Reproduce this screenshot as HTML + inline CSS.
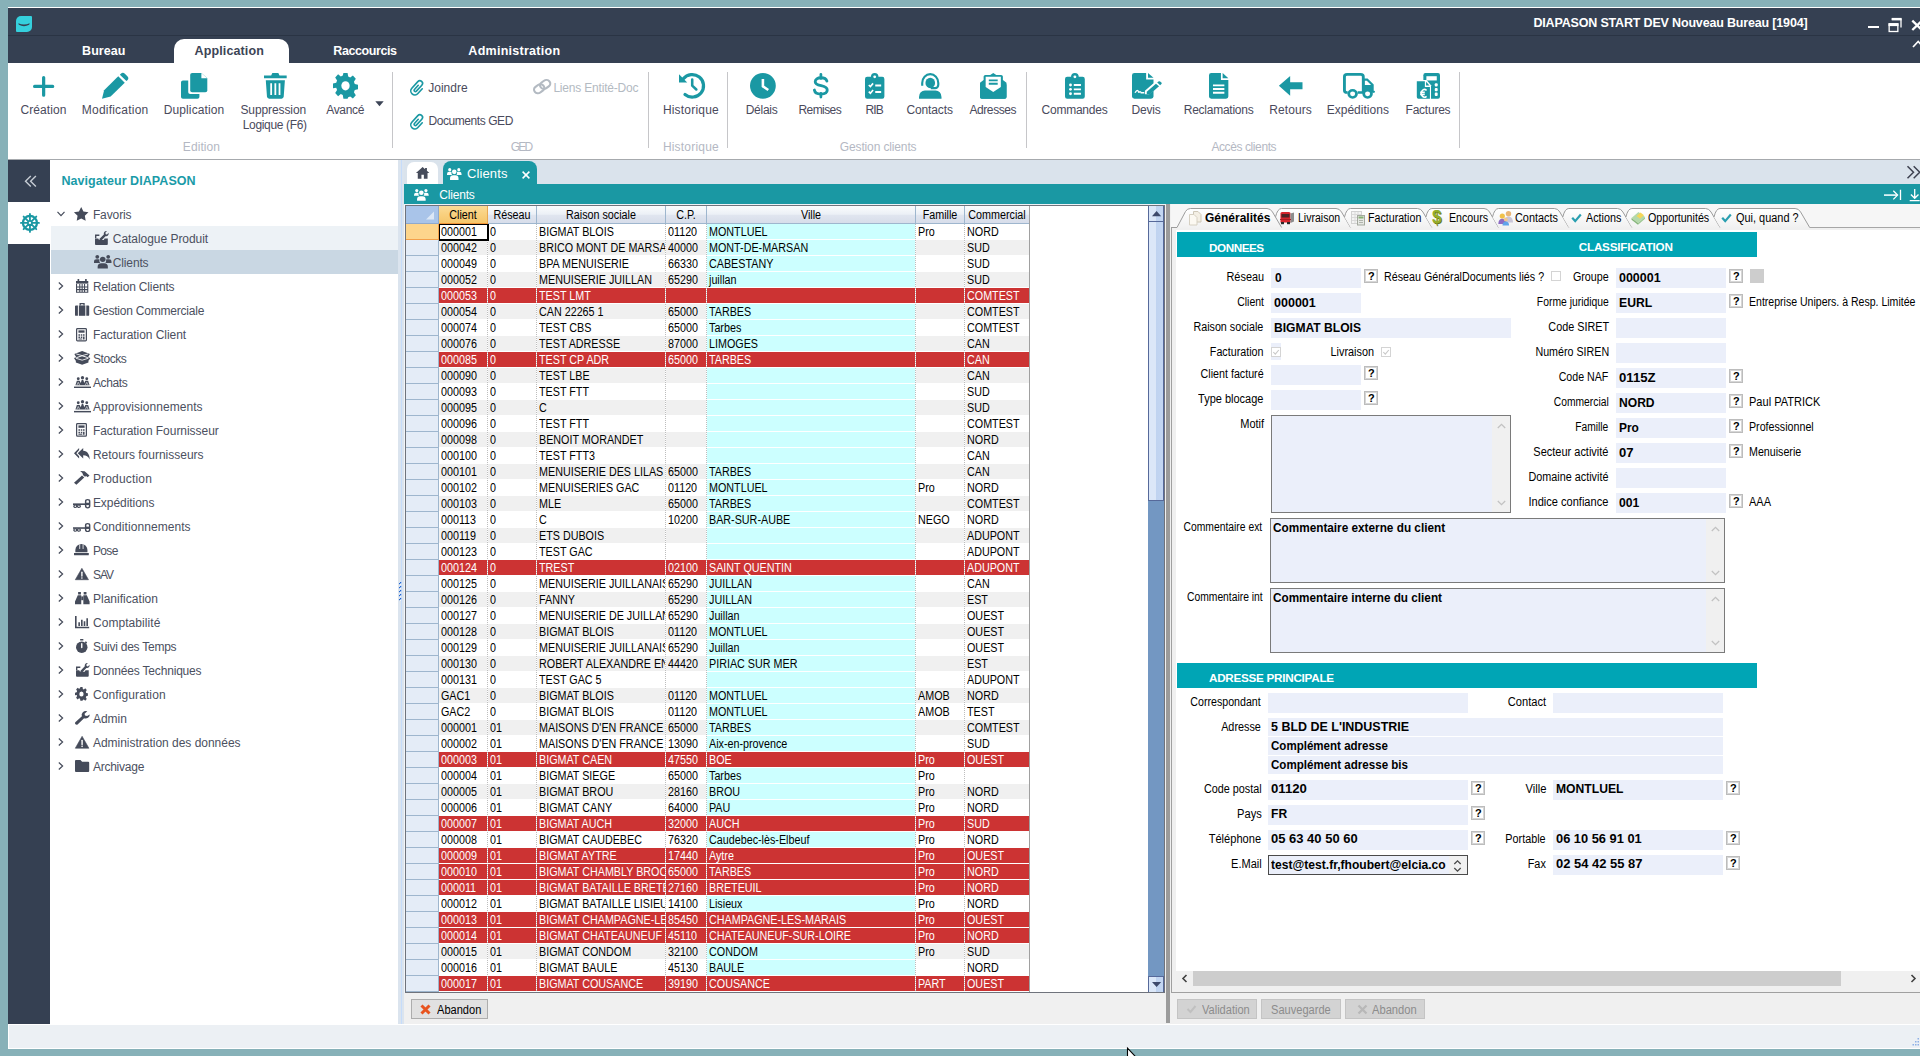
<!DOCTYPE html><html><head><meta charset='utf-8'><title>DIAPASON</title><style>
*{box-sizing:border-box;margin:0;padding:0}
html,body{width:1920px;height:1056px;overflow:hidden}
body{background:#87b1b8;font-family:"Liberation Sans",sans-serif;position:relative;font-size:12px;color:#000}
#pg{position:absolute;left:0;top:0;width:1920px;height:1056px;overflow:hidden}
.a{position:absolute}
svg{overflow:visible}
.t{position:absolute;white-space:nowrap;line-height:1}
.sep{position:absolute;width:1px;background:#c6c6c9;top:72px;height:76px}
.q{position:absolute;width:14px;height:14px;border:1px solid #bcbcbc;background:#fff;box-shadow:inset 0 0 0 1px #d6d6d6}
.q i{position:absolute;left:3.3px;top:1.1px;font-style:normal;font-weight:bold;font-size:11.5px;line-height:1;transform:scaleX(.95);transform-origin:0 0}
.gh{position:absolute;top:0;height:18px;border-right:1px solid #9eb6ce;border-bottom:1px solid #9eb6ce;background:linear-gradient(#fafcfd 0%,#ecf0f6 48%,#e0e5ef 56%,#d7ddea 100%)}
.row{position:absolute;left:0;height:16px;width:624px}
.c{position:absolute;top:0;height:15px;overflow:hidden}
.c span{position:absolute;left:2.1px;top:1.6px;font-size:12.5px;line-height:1;white-space:nowrap;transform:scaleX(0.86);transform-origin:0 0}
.rh{position:absolute;left:0;width:33px;height:16px;background:#e4ecf7;border-bottom:1px solid #9eb6ce;border-right:1px solid #9eb6ce}
.vd{position:absolute;top:18px;width:1px;height:768px;background-image:linear-gradient(#bdbdbd 50%,rgba(255,255,255,0) 50%);background-size:1px 2px}
.f{position:absolute;background:#ebeffa}
</style></head><body><div id='pg'>
<div class='a' style='left:8px;top:7px;width:1912px;height:1px;background:#fff;'></div>
<div class='a' style='left:8px;top:8px;width:1912px;height:55px;background:#354052;'></div>
<div class='a' style='left:8px;top:35px;width:1912px;height:1px;background:#2a3444;'></div>
<div class='a' style='left:15.5px;top:15.5px;width:16.5px;height:16.5px;background:#35d0dd;border-radius:5px 1px 5px 1px'></div>
<svg class='a' style='left:17.5px;top:21.5px' width='12' height='5' viewBox='0 0 12 5'><path d='M0.300 1.200 Q6 4 11.700 1.200 L11.200 2.800 Q6 5.600 0.800 2.800 Z' fill='#354052'/></svg>
<div class='t' style='top:16.92px;font-size:12.5px;color:#fff;letter-spacing:-0.170px;font-weight:bold;left:1533.40px;'>DIAPASON START DEV Nouveau Bureau [1904]</div>
<div class='a' style='left:1867.5px;top:26px;width:11px;height:2.2px;background:#fff;'></div>
<svg class='a' style='left:1888px;top:17px' width='14' height='16' viewBox='0 0 14 16'><path d='M3.700 2.200h9.300v8.300' fill='none' stroke='#fff' stroke-width='1.300'/><rect x='3.700' y='0.900' width='9.900' height='2.500' fill='#fff'/><rect x='1.150' y='7' width='8.700' height='7.500' fill='#354052' stroke='#fff' stroke-width='1.300'/><rect x='0.500' y='6.100' width='10' height='3' fill='#fff'/></svg>
<svg class='a' style='left:1910px;top:18px' width='10' height='14' viewBox='0 0 10 14'><path d='M2.300 2.600L12 12M12 2.600L2.300 12' stroke='#fff' stroke-width='2.300' fill='none'/></svg>
<svg class='a' style='left:1911px;top:39px' width='9' height='10' viewBox='0 0 9 10'><path d='M2 8L7.200 2.500 12.400 8' stroke='#fff' stroke-width='1.700' fill='none'/></svg>
<div class='a' style='left:173.5px;top:38.5px;width:115.5px;height:25px;background:#fff;border-radius:10px 10px 0 0'></div>
<div class='t' style='top:45.22px;font-size:12.5px;color:#fff;letter-spacing:0.027px;font-weight:bold;left:103.71px;transform:translateX(-50%);'>Bureau</div>
<div class='t' style='top:45.22px;font-size:12.5px;color:#3c4456;letter-spacing:0.115px;font-weight:bold;left:229.26px;transform:translateX(-50%);'>Application</div>
<div class='t' style='top:45.22px;font-size:12.5px;color:#fff;letter-spacing:-0.411px;font-weight:bold;left:364.99px;transform:translateX(-50%);'>Raccourcis</div>
<div class='t' style='top:45.22px;font-size:12.5px;color:#fff;letter-spacing:0.270px;font-weight:bold;left:514.33px;transform:translateX(-50%);'>Administration</div>
<div class='a' style='left:8px;top:63px;width:1912px;height:96px;background:#fff;'></div>
<div class='a' style='left:8px;top:159px;width:1912px;height:1px;background:#a6a9ad;'></div>
<svg class='a' style='left:33.40px;top:75.90px;color:#1a98a3' width='21.30' height='20.80' viewBox='1.4 1.4 21.20 21.20' preserveAspectRatio='none' fill='#1a98a3'><path d='M12 3v18M3 12h18' stroke='currentColor' stroke-width='3.200' stroke-linecap='round' fill='none'/></svg>
<div class='t' style='top:104.04px;font-size:12px;color:#4a4a5c;letter-spacing:0.092px;left:43.45px;transform:translateX(-50%);'>Création</div>
<svg class='a' style='left:102.20px;top:72.75px;color:#1a98a3' width='26.20' height='25.65' viewBox='1.5 0.4 22.10 22.10' preserveAspectRatio='none' fill='#1a98a3'><path d='M1.500 22.500l1.800-7.300L15.200 3.300l5.500 5.500L8.800 20.700z'/><path d='M16.600 1.900l.8-.8a2.400 2.400 0 0 1 3.400 0l2.100 2.100a2.400 2.400 0 0 1 0 3.400l-.8.800z'/></svg>
<div class='t' style='top:104.04px;font-size:12px;color:#4a4a5c;letter-spacing:0.215px;left:115.11px;transform:translateX(-50%);'>Modification</div>
<svg class='a' style='left:181.30px;top:72.75px;color:#1a98a3' width='26.30' height='25.65' viewBox='1.0 1.0 20.00 22.00' preserveAspectRatio='none' fill='#1a98a3'><path d='M9.5 1h7l4.5 4.5V16a1.5 1.5 0 0 1-1.500 1.5h-10A1.5 1.5 0 0 1 8 16V2.500A1.5 1.5 0 0 1 9.500 1z'/><path d='M16.5 1v4.500H21' fill='#fff'/><path d='M2.500 7.5H6.500V17.500a1.500 1.500 0 0 0 1.500 1.500H15V21.500a1.500 1.500 0 0 1-1.500 1.500h-11A1.500 1.500 0 0 1 1 21.500V9A1.500 1.500 0 0 1 2.500 7.500z'/></svg>
<div class='t' style='top:104.04px;font-size:12px;color:#4a4a5c;letter-spacing:0.123px;left:194.06px;transform:translateX(-50%);'>Duplication</div>
<svg class='a' style='left:263.80px;top:72.75px;color:#1a98a3' width='22.70' height='25.65' viewBox='2.5 1.5 19.00 21.50' preserveAspectRatio='none' fill='#1a98a3'><path d='M2.5 3.500H8.500L9.500 1.500h5l1 2h6v2.400h-19z'/><path d='M4 7.500h16l-1 14a1.800 1.800 0 0 1-1.800 1.500H6.800A1.800 1.800 0 0 1 5 21.500z'/><path d='M8.500 10v10M12 10v10M15.500 10v10' stroke='#fff' stroke-width='1.500'/></svg>
<div class='t' style='top:104.04px;font-size:12px;color:#4a4a5c;letter-spacing:-0.091px;left:273.25px;transform:translateX(-50%);'>Suppression</div>
<div class='t' style='top:119.04px;font-size:12px;color:#4a4a5c;letter-spacing:-0.349px;left:274.73px;transform:translateX(-50%);'>Logique (F6)</div>
<svg class='a' style='left:333.00px;top:72.75px;color:#1a98a3' width='25.00' height='25.65' viewBox='0.0 1.0 24.00 22.00' preserveAspectRatio='none' fill='#1a98a3'><path d='M10 1h4l.6 3.100 1.900.8 2.600-1.800 2.800 2.800-1.800 2.600.8 1.900 3.100.6v4l-3.100.6-.8 1.900 1.800 2.600-2.800 2.800-2.600-1.800-1.900.8L14 23h-4l-.6-3.100-1.900-.8-2.600 1.800-2.800-2.800 1.800-2.600-.8-1.900L0 14v-4l3.100-.6.8-1.900-1.800-2.600 2.800-2.800 2.600 1.800 1.900-.8z'/><circle cx='12' cy='12' r='4' fill='#fff'/></svg>
<div class='t' style='top:104.04px;font-size:12px;color:#4a4a5c;letter-spacing:-0.322px;left:345.14px;transform:translateX(-50%);'>Avancé</div>
<svg class='a' style='left:374.5px;top:101.300px' width='9' height='6' viewBox='0 0 9 6'><path d='M0.300 0.300h8.400L4.500 5.300z' fill='#3c4456'/></svg>
<div class='sep' style='left:392px'></div>
<svg class='a' style='left:410.00px;top:79.60px;color:#1a98a3' width='13.30' height='15.70' viewBox='3.4 2.1 16.30 19.60' preserveAspectRatio='none' fill='#1a98a3'><g transform='rotate(42 12 12) translate(24 0) scale(-1 1)'><path d='M6.500 8.500V16.500a5 5 0 0 0 10 0V5.500a3.300 3.300 0 0 0-6.600 0V15.500a1.600 1.600 0 0 0 3.200 0V8.500' fill='none' stroke='currentColor' stroke-width='2' stroke-linecap='round'/></g></svg>
<div class='t' style='top:81.54px;font-size:12px;color:#4a4a5c;letter-spacing:0.007px;left:428.20px;'>Joindre</div>
<svg class='a' style='left:410.00px;top:113.60px;color:#1a98a3' width='13.30' height='15.70' viewBox='3.4 2.1 16.30 19.60' preserveAspectRatio='none' fill='#1a98a3'><g transform='rotate(42 12 12) translate(24 0) scale(-1 1)'><path d='M6.500 8.500V16.500a5 5 0 0 0 10 0V5.500a3.300 3.300 0 0 0-6.600 0V15.500a1.600 1.600 0 0 0 3.200 0V8.500' fill='none' stroke='currentColor' stroke-width='2' stroke-linecap='round'/></g></svg>
<div class='t' style='top:115.34px;font-size:12px;color:#4a4a5c;letter-spacing:-0.427px;left:428.40px;'>Documents GED</div>
<svg class='a' style='left:532.70px;top:79.00px;color:#b3bac2' width='18.30' height='15.20' viewBox='0.6 1.7 22.80 20.60' preserveAspectRatio='none' fill='#b3bac2'><g transform='rotate(-38 12 12)' fill='none' stroke='currentColor' stroke-width='2.700'><rect x='0.500' y='7.200' width='13.500' height='9.600' rx='4.800'/><rect x='10' y='7.200' width='13.500' height='9.600' rx='4.800'/></g></svg>
<div class='t' style='top:81.54px;font-size:12px;color:#b3bac2;letter-spacing:-0.190px;left:553.40px;'>Liens Entité-Doc</div>
<div class='t' style='top:141.04px;font-size:12px;color:#b4b8c3;letter-spacing:0.085px;left:201.44px;transform:translateX(-50%);'>Edition</div>
<div class='t' style='top:141.04px;font-size:12px;color:#b4b8c3;letter-spacing:-1.777px;left:521.11px;transform:translateX(-50%);'>GED</div>
<div class='sep' style='left:648px'></div>
<svg class='a' style='left:678.50px;top:72.75px;color:#1a98a3' width='26.10' height='25.65' viewBox='0.2 0.2 23.50 23.30' preserveAspectRatio='none' fill='#1a98a3'><path d='M4.100 5.500A10.200 10.200 0 1 1 5.600 19.700' fill='none' stroke='currentColor' stroke-width='2.900' stroke-linecap='round'/><path d='M0.200 1.300V8.900H7.600z'/><path d='M12.100 6.200V11.700L15.800 15.200' fill='none' stroke='currentColor' stroke-width='2.300' stroke-linecap='round' stroke-linejoin='round'/></svg>
<div class='t' style='top:104.04px;font-size:12px;color:#4a4a5c;letter-spacing:0.197px;left:690.90px;transform:translateX(-50%);'>Historique</div>
<div class='t' style='top:141.04px;font-size:12px;color:#b4b8c3;letter-spacing:0.197px;left:690.90px;transform:translateX(-50%);'>Historique</div>
<div class='sep' style='left:727px'></div>
<svg class='a' style='left:749.60px;top:72.75px;color:#1a98a3' width='25.80' height='25.65' viewBox='0.5 0.5 23.00 23.00' preserveAspectRatio='none' fill='#1a98a3'><circle cx='12' cy='12' r='11.500'/><path d='M12 5.800v6.700l4.800 3.200' stroke='#fff' stroke-width='2.300' fill='none' stroke-linecap='butt' stroke-linejoin='miter'/></svg>
<div class='t' style='top:104.04px;font-size:12px;color:#4a4a5c;letter-spacing:-0.269px;left:761.57px;transform:translateX(-50%);'>Délais</div>
<svg class='a' style='left:812.70px;top:73.40px;color:#1a98a3' width='15.60' height='25.40' viewBox='4.5 -0.3 14.80 24.60' preserveAspectRatio='none' fill='#1a98a3'><path d='M12 1v4M12 19.500V23' stroke='currentColor' stroke-width='2.600' stroke-linecap='round'/><path d='M17.700 7.600c-.6-2.100-2.700-3.300-5.700-3.300-3.200 0-5.400 1.500-5.400 3.800 0 5.300 11.400 2.500 11.400 8.100 0 2.400-2.400 3.900-6 3.900-3.400 0-5.800-1.400-6.200-3.900' stroke='currentColor' stroke-width='2.700' fill='none' stroke-linecap='round'/></svg>
<div class='t' style='top:104.04px;font-size:12px;color:#4a4a5c;letter-spacing:-0.596px;left:819.80px;transform:translateX(-50%);'>Remises</div>
<svg class='a' style='left:865.40px;top:72.75px;color:#1a98a3' width='19.40' height='25.65' viewBox='3.0 0.0 18.00 23.50' preserveAspectRatio='none' fill='#1a98a3'><path d='M5 3.500h3.500a3.500 3.500 0 0 1 7 0H19a2 2 0 0 1 2 2V21.500a2 2 0 0 1-2 2H5a2 2 0 0 1-2-2V5.500a2 2 0 0 1 2-2z'/><circle cx='12' cy='3.500' r='1.300' fill='#fff'/><path d='M6.500 11l1.500 1.500 2.500-3M6.500 17l1.500 1.500 2.500-3' stroke='#fff' stroke-width='1.500' fill='none'/><path d='M12.500 11.500h5.500M12.500 17.500h5.500' stroke='#fff' stroke-width='1.800'/></svg>
<div class='t' style='top:104.04px;font-size:12px;color:#4a4a5c;letter-spacing:-0.902px;left:874.15px;transform:translateX(-50%);'>RIB</div>
<svg class='a' style='left:919.00px;top:72.75px;color:#1a98a3' width='22.50' height='25.65' viewBox='1.5 1.0 21.00 22.00' preserveAspectRatio='none' fill='#1a98a3'><path d='M12 1a8.500 8.500 0 0 1 8.500 8.500v1.500a4 4 0 0 1-4 4h-4v-2h4a2 2 0 0 0 2-2V9.500a6.500 6.500 0 0 0-13 0v2.500h-2V9.500A8.500 8.500 0 0 1 12 1z'/><circle cx='12' cy='9.500' r='4.500'/><path d='M1.500 23v-1.500a5.500 5.500 0 0 1 5.500-5.500h10a5.500 5.500 0 0 1 5.500 5.500V23z'/></svg>
<div class='t' style='top:104.04px;font-size:12px;color:#4a4a5c;letter-spacing:-0.137px;left:929.63px;transform:translateX(-50%);'>Contacts</div>
<svg class='a' style='left:980.00px;top:72.75px;color:#1a98a3' width='26.50' height='25.65' viewBox='1.0 0.3 22.00 22.70' preserveAspectRatio='none' fill='#1a98a3'><path d='M1 9L4 6.500V3.500Q4 2 5.500 2H9.500L12 0.300 14.500 2H18.500Q20 2 20 3.500V6.500L23 9V21.500Q23 23 21.500 23H2.500Q1 23 1 21.500z'/><path d='M5.700 3.700H18.300V12.800L12 17.200 5.700 12.800z' fill='#fff'/><path d='M8.300 6.800h7.400M8.300 9.800h7.400' stroke='currentColor' stroke-width='1.700'/><path d='M1 10.200L12 18 23 10.200V21.500Q23 23 21.500 23H2.500Q1 23 1 21.500z'/></svg>
<div class='t' style='top:104.04px;font-size:12px;color:#4a4a5c;letter-spacing:-0.403px;left:992.80px;transform:translateX(-50%);'>Adresses</div>
<div class='t' style='top:141.04px;font-size:12px;color:#b4b8c3;letter-spacing:-0.136px;left:878.13px;transform:translateX(-50%);'>Gestion clients</div>
<div class='sep' style='left:1026px'></div>
<svg class='a' style='left:1065.20px;top:72.75px;color:#1a98a3' width='19.80' height='25.65' viewBox='3.0 0.0 18.00 23.50' preserveAspectRatio='none' fill='#1a98a3'><path d='M5 3.500h3.500a3.500 3.500 0 0 1 7 0H19a2 2 0 0 1 2 2V21.500a2 2 0 0 1-2 2H5a2 2 0 0 1-2-2V5.500a2 2 0 0 1 2-2z'/><circle cx='12' cy='3.500' r='1.300' fill='#fff'/><circle cx='8' cy='11' r='1.300' fill='#fff'/><circle cx='8' cy='15' r='1.300' fill='#fff'/><circle cx='8' cy='19' r='1.300' fill='#fff'/><path d='M11 11h6.500M11 15h6.500M11 19h6.500' stroke='#fff' stroke-width='1.700'/></svg>
<div class='t' style='top:104.04px;font-size:12px;color:#4a4a5c;letter-spacing:-0.228px;left:1074.49px;transform:translateX(-50%);'>Commandes</div>
<svg class='a' style='left:1131.50px;top:72.75px;color:#1a98a3' width='29.75' height='25.65' viewBox='1.0 0.0 24.20 24.00' preserveAspectRatio='none' fill='#1a98a3'><path d='M3 0h9.500v6H18.500v3.500l-7 7V20H15l3.500-3.500V22a2 2 0 0 1-2 2H3a2 2 0 0 1-2-2V2a2 2 0 0 1 2-2z'/><path d='M14 0l4.500 4.500H14z'/><path d='M3.500 18.500c1.500-3 2.500-3 3 0 .5-1.500 1.500-1.500 2 0h2.500' stroke='#fff' stroke-width='1.200' fill='none'/><path d='M13 17.500l7.500-7.500 2.500 2.500-7.500 7.500H13z'/><path d='M21.500 9l1-1a1 1 0 0 1 1.400 0l1 1a1 1 0 0 1 0 1.400l-1 1z'/></svg>
<div class='t' style='top:104.04px;font-size:12px;color:#4a4a5c;letter-spacing:-0.202px;left:1146.00px;transform:translateX(-50%);'>Devis</div>
<svg class='a' style='left:1209.40px;top:72.75px;color:#1a98a3' width='19.35' height='25.65' viewBox='3.0 0.0 17.00 24.00' preserveAspectRatio='none' fill='#1a98a3'><path d='M5 0h8.500v6.500H20V22a2 2 0 0 1-2 2H5a2 2 0 0 1-2-2V2a2 2 0 0 1 2-2z'/><path d='M15 0l5 5h-5z'/><path d='M6.500 11.500h10M6.500 15h10M6.500 18.500h10' stroke='#fff' stroke-width='1.700'/></svg>
<div class='t' style='top:104.04px;font-size:12px;color:#4a4a5c;letter-spacing:-0.250px;left:1218.63px;transform:translateX(-50%);'>Reclamations</div>
<svg class='a' style='left:1279.20px;top:76.00px;color:#1a98a3' width='23.50' height='19.70' viewBox='1.1 3.5 21.90 17.00' preserveAspectRatio='none' fill='#1a98a3'><path d='M11.500 3.500L1 12l10.500 8.500v-5.500H23V9H11.500z'/></svg>
<div class='t' style='top:104.04px;font-size:12px;color:#4a4a5c;letter-spacing:0.072px;left:1290.64px;transform:translateX(-50%);'>Retours</div>
<svg class='a' style='left:1343.00px;top:72.75px;color:#1a98a3' width='32.00' height='25.65' viewBox='-0.1 0.9 24.60 21.40' preserveAspectRatio='none' fill='#1a98a3'><path d='M11.200 17.200H15.500V4Q15.500 2 13.500 2H3Q1 2 1 4V15.200Q1 17.200 3 17.200H3.500' fill='none' stroke='currentColor' stroke-width='2.200'/><path d='M15.500 5.500h3.300l4.700 4.900v6.800h-1.500a3.900 3.900 0 0 0-6.500 0z'/><path d='M16.700 7.300h1.500l3.300 3.600h-4.800z' fill='#fff'/><circle cx='7.300' cy='18.300' r='3' fill='none' stroke='currentColor' stroke-width='2.100'/><circle cx='18.800' cy='18.300' r='3' fill='none' stroke='currentColor' stroke-width='2.100'/><path d='M22.500 15.800h1.200Q24.500 15.800 24.500 16.600T23.700 17.400H22.500z'/></svg>
<div class='t' style='top:104.04px;font-size:12px;color:#4a4a5c;letter-spacing:0.016px;left:1357.81px;transform:translateX(-50%);'>Expéditions</div>
<svg class='a' style='left:1415.80px;top:73.40px;color:#1a98a3' width='24.00' height='26.40' viewBox='-0.3 1.5 23.80 23.00' preserveAspectRatio='none' fill='#1a98a3'><path d='M7 3.500a2 2 0 0 1 2-2h12.500a2 2 0 0 1 2 2v18.500a2 2 0 0 1-2 2H7z'/><rect x='10' y='4.300' width='10.300' height='3.700' fill='#fff'/><rect x='18.300' y='10.400' width='2.900' height='2.900' rx='.9' fill='#fff'/><rect x='18.300' y='14.500' width='2.900' height='2.900' rx='.9' fill='#fff'/><rect x='18.300' y='18.600' width='2.900' height='2.900' rx='.9' fill='#fff'/><path d='M-0.300 7.700h10.500l4.400 4.400v12.400H-0.300z' fill='#fff'/><path d='M0.500 8.600h8v5h5v10.400H2a1.500 1.500 0 0 1-1.500-1.500z'/><path d='M9.700 9.100l3.400 3.400H9.700z'/><path d='M10.200 16.600a3.300 3.300 0 1 0 0 5.200M3.800 18.300h4.600M3.800 20.100h4.600' stroke='#fff' stroke-width='1.400' fill='none'/></svg>
<div class='t' style='top:104.04px;font-size:12px;color:#4a4a5c;letter-spacing:-0.247px;left:1427.98px;transform:translateX(-50%);'>Factures</div>
<div class='t' style='top:141.04px;font-size:12px;color:#b4b8c3;letter-spacing:-0.402px;left:1243.80px;transform:translateX(-50%);'>Accès clients</div>
<div class='sep' style='left:1459px'></div>
<div class='a' style='left:8px;top:160px;width:42px;height:864px;background:#354052;'></div>
<div class='a' style='left:8px;top:202px;width:42px;height:42px;background:#fff;'></div>
<svg class='a' style='left:24px;top:175px' width='13' height='13' viewBox='0 0 13 13'><path d='M6.800 1L1.500 6.300 6.800 11.600M11.900 1L6.600 6.300 11.900 11.600' stroke='#c6ccd4' stroke-width='1.400' fill='none'/></svg>
<svg class='a' style='left:19.90px;top:213.00px;color:#1a98a3' width='19.90' height='19.80' viewBox='0.1 0.1 23.80 23.80' preserveAspectRatio='none' fill='#1a98a3'><circle cx='12' cy='12' r='8.400' fill='none' stroke='currentColor' stroke-width='2.700'/><path d='M12 1.200v21.600M1.200 12h21.600M4.400 4.400l15.200 15.200M19.600 4.400L4.400 19.600' stroke='currentColor' stroke-width='2.200' stroke-linecap='round'/><circle cx='12' cy='12' r='3.300'/><circle cx='12' cy='12' r='1.400' fill='#fff'/></svg>
<div class='a' style='left:50px;top:160px;width:348px;height:864px;background:#fff;'></div>
<div class='t' style='top:175.12px;font-size:12.5px;color:#1a9ba8;letter-spacing:0.059px;font-weight:bold;left:61.40px;'>Navigateur DIAPASON</div>
<div class='a' style='left:51px;top:226px;width:347px;height:24px;background:#edf2f6;'></div>
<div class='a' style='left:51px;top:250px;width:347px;height:24px;background:#c9d7e3;'></div>
<svg class='a' style='left:56.500px;top:210.7px' width='8' height='6' viewBox='0 0 8 6'><path d='M0.500 0.800L4 4.600 7.500 0.800' stroke='#454b5a' stroke-width='1.200' fill='none'/></svg>
<svg class='a' style='left:74.00px;top:207.00px;color:#454b5a' width='14.40' height='13.80' viewBox='1.1 1.1 21.80 21.00' preserveAspectRatio='none' fill='#454b5a'><path d='M12 1l3.400 7 7.600 1.100-5.500 5.400 1.300 7.600L12 18.500 5.200 22.100l1.300-7.600L1 9.100 8.600 8z'/></svg>
<div class='t' style='top:208.74px;font-size:12px;color:#4b5060;letter-spacing:-0.107px;left:92.90px;'>Favoris</div>
<svg class='a' style='left:95.00px;top:230.90px;color:#454b5a' width='13.70' height='14.00' viewBox='1.0 0.6 23.50 22.40' preserveAspectRatio='none' fill='#454b5a'><path d='M1 12.500h5.500l1.500 2.500h8l1.500-2.500H23V21.500Q23 23 21.500 23h-19Q1 23 1 21.500z'/><path d='M2.200 12V7.500h6.300' fill='none' stroke='currentColor' stroke-width='2.400'/><path d='M8.500 13.500L16.200 6a4.300 4.300 0 0 1 5.300-5.300l-2.700 2.700.6 2.200 2.200.6 2.700-2.700A4.300 4.300 0 0 1 19 8.800L12.500 15.500H9z'/></svg>
<div class='t' style='top:232.74px;font-size:12px;color:#4b5060;letter-spacing:-0.042px;left:112.80px;'>Catalogue Produit</div>
<svg class='a' style='left:93.50px;top:254.90px;color:#454b5a' width='17.50' height='13.60' viewBox='0.0 2.4 24.00 19.10' preserveAspectRatio='none' fill='#454b5a'><circle cx='12' cy='8.500' r='3.800'/><path d='M5 21.500v-2.500a5 5 0 0 1 5-5h4a5 5 0 0 1 5 5v2.500z'/><circle cx='4.500' cy='5' r='2.600'/><circle cx='19.500' cy='5' r='2.600'/><path d='M0 13.500v-1.500a3.500 3.500 0 0 1 3.500-3.500h2.500a4 4 0 0 1 1.500.3 5.500 5.500 0 0 0 .8 4.700zM24 13.500v-1.500a3.500 3.500 0 0 0-3.500-3.500h-2.500a4 4 0 0 0-1.500.3 5.500 5.500 0 0 1-.8 4.700z'/></svg>
<div class='t' style='top:256.74px;font-size:12px;color:#4b5060;letter-spacing:-0.147px;left:112.80px;'>Clients</div>
<svg class='a' style='left:57.800px;top:281.5px' width='6' height='8' viewBox='0 0 6 8'><path d='M0.800 0.500L4.600 4 0.800 7.500' stroke='#454b5a' stroke-width='1.200' fill='none'/></svg>
<svg class='a' style='left:75.60px;top:279.00px;color:#454b5a' width='12.30' height='13.80' viewBox='3.0 1.5 18.00 20.80' preserveAspectRatio='none' fill='#454b5a'><path d='M3 4.500h18v4H3z'/><path d='M6.500 1.500v4M17.500 1.500v4' stroke='currentColor' stroke-width='2.400'/><path d='M3.800 9v12.500h16.400V9M3 13.500h18M3 17.500h18M8.500 9v12.500M12 9v12.500M15.500 9v12.500' stroke='currentColor' stroke-width='1.600' fill='none'/></svg>
<div class='t' style='top:280.74px;font-size:12px;color:#4b5060;letter-spacing:-0.156px;left:92.90px;'>Relation Clients</div>
<svg class='a' style='left:57.800px;top:305.5px' width='6' height='8' viewBox='0 0 6 8'><path d='M0.800 0.500L4.600 4 0.800 7.500' stroke='#454b5a' stroke-width='1.200' fill='none'/></svg>
<svg class='a' style='left:74.60px;top:303.20px;color:#454b5a' width='14.20' height='12.80' viewBox='1.0 1.5 22.00 21.00' preserveAspectRatio='none' fill='#454b5a'><path d='M7 5.500h10v17H7z'/><path d='M9 5.500V2.500h6v3' fill='none' stroke='currentColor' stroke-width='2'/><path d='M2.500 5.500h3v17h-3A1.500 1.500 0 0 1 1 21V7a1.500 1.500 0 0 1 1.500-1.500zM18.500 5.500h3A1.500 1.500 0 0 1 23 7v14a1.500 1.500 0 0 1-1.500 1.500h-3z'/></svg>
<div class='t' style='top:304.74px;font-size:12px;color:#4b5060;letter-spacing:-0.215px;left:92.90px;'>Gestion Commerciale</div>
<svg class='a' style='left:57.800px;top:329.5px' width='6' height='8' viewBox='0 0 6 8'><path d='M0.800 0.500L4.600 4 0.800 7.500' stroke='#454b5a' stroke-width='1.200' fill='none'/></svg>
<svg class='a' style='left:76.00px;top:327.50px;color:#454b5a' width='11.00' height='13.50' viewBox='3.0 0.5 18.00 23.00' preserveAspectRatio='none' fill='#454b5a'><rect x='4' y='1.500' width='16' height='21' rx='1.500' fill='none' stroke='currentColor' stroke-width='2'/><rect x='7' y='4.500' width='10' height='4'/><path d='M7 11h2.500v2.500H7zM10.800 11h2.500v2.500h-2.500zM14.500 11H17v2.500h-2.500zM7 15h2.500v2.500H7zM10.800 15h2.500v2.500h-2.500zM14.500 15H17v5h-2.500zM7 18.500h6.300V20H7z'/></svg>
<div class='t' style='top:328.74px;font-size:12px;color:#4b5060;letter-spacing:-0.044px;left:92.90px;'>Facturation Client</div>
<svg class='a' style='left:57.800px;top:353.5px' width='6' height='8' viewBox='0 0 6 8'><path d='M0.800 0.500L4.600 4 0.800 7.500' stroke='#454b5a' stroke-width='1.200' fill='none'/></svg>
<svg class='a' style='left:74.00px;top:351.00px;color:#454b5a' width='16.30' height='13.80' viewBox='1.0 1.5 22.00 21.00' preserveAspectRatio='none' fill='#454b5a'><path d='M12 1.500L22.500 6 20 11 12 8 4 11 1.500 6z'/><path d='M3.500 12.500L12 9.500l8.500 3V19L12 22.500 3.500 19z'/><path d='M1 12l3-1 2 4-3 1zM23 12l-3-1-2 4 3 1z'/><path d='M4 6l8 2.500L20 6' stroke='#fff' stroke-width='1.200' fill='none'/><path d='M3.500 12.500l8.500 3 8.500-3' stroke='#fff' stroke-width='1.200' fill='none'/></svg>
<div class='t' style='top:352.74px;font-size:12px;color:#4b5060;letter-spacing:-0.422px;left:92.90px;'>Stocks</div>
<svg class='a' style='left:57.800px;top:377.5px' width='6' height='8' viewBox='0 0 6 8'><path d='M0.800 0.500L4.600 4 0.800 7.500' stroke='#454b5a' stroke-width='1.200' fill='none'/></svg>
<svg class='a' style='left:73.70px;top:376.00px;color:#454b5a' width='17.00' height='12.00' viewBox='0.0 4.2 24.00 16.80' preserveAspectRatio='none' fill='#454b5a'><circle cx='6' cy='8' r='2'/><circle cx='12' cy='6.500' r='2.300'/><circle cx='18' cy='8' r='2'/><path d='M2 17l2-6h4l1.500 3L11 9.500h2l1.500 4.500 1.500-3h4l2 6z'/><path d='M0 19h24v2H0z'/><path d='M4 17l2-4 2 4M16 17l2-4 2 4' stroke='#fff' stroke-width='0.800' fill='none'/></svg>
<div class='t' style='top:376.74px;font-size:12px;color:#4b5060;letter-spacing:-0.357px;left:92.90px;'>Achats</div>
<svg class='a' style='left:57.800px;top:401.5px' width='6' height='8' viewBox='0 0 6 8'><path d='M0.800 0.500L4.600 4 0.800 7.500' stroke='#454b5a' stroke-width='1.200' fill='none'/></svg>
<svg class='a' style='left:73.70px;top:399.80px;color:#454b5a' width='17.00' height='12.40' viewBox='0.0 4.2 24.00 16.80' preserveAspectRatio='none' fill='#454b5a'><circle cx='6' cy='8' r='2'/><circle cx='12' cy='6.500' r='2.300'/><circle cx='18' cy='8' r='2'/><path d='M2 17l2-6h4l1.500 3L11 9.500h2l1.500 4.500 1.500-3h4l2 6z'/><path d='M0 19h24v2H0z'/><path d='M4 17l2-4 2 4M16 17l2-4 2 4' stroke='#fff' stroke-width='0.800' fill='none'/></svg>
<div class='t' style='top:400.74px;font-size:12px;color:#4b5060;letter-spacing:0.057px;left:92.90px;'>Approvisionnements</div>
<svg class='a' style='left:57.800px;top:425.5px' width='6' height='8' viewBox='0 0 6 8'><path d='M0.800 0.500L4.600 4 0.800 7.500' stroke='#454b5a' stroke-width='1.200' fill='none'/></svg>
<svg class='a' style='left:76.00px;top:423.00px;color:#454b5a' width='11.00' height='13.80' viewBox='3.0 0.5 18.00 23.00' preserveAspectRatio='none' fill='#454b5a'><rect x='4' y='1.500' width='16' height='21' rx='1.500' fill='none' stroke='currentColor' stroke-width='2'/><rect x='7' y='4.500' width='10' height='4'/><path d='M7 11h2.500v2.500H7zM10.800 11h2.500v2.500h-2.500zM14.500 11H17v2.500h-2.500zM7 15h2.500v2.500H7zM10.800 15h2.500v2.500h-2.500zM14.500 15H17v5h-2.500zM7 18.500h6.300V20H7z'/></svg>
<div class='t' style='top:424.74px;font-size:12px;color:#4b5060;letter-spacing:-0.037px;left:92.90px;'>Facturation Fournisseur</div>
<svg class='a' style='left:57.800px;top:449.5px' width='6' height='8' viewBox='0 0 6 8'><path d='M0.800 0.500L4.600 4 0.800 7.500' stroke='#454b5a' stroke-width='1.200' fill='none'/></svg>
<svg class='a' style='left:73.70px;top:448.30px;color:#454b5a' width='15.70' height='11.40' viewBox='0.0 3.5 23.00 16.40' preserveAspectRatio='none' fill='#454b5a'><path d='M13.500 3.500L5.500 11l8 7.500V14c4.500 0 7.500 1.500 9.500 6 0-7-3-12-9.500-12.500z'/><path d='M7.500 3.500v3L3.500 11l4 4.500v3L0 11z'/></svg>
<div class='t' style='top:448.74px;font-size:12px;color:#4b5060;letter-spacing:-0.001px;left:92.90px;'>Retours fournisseurs</div>
<svg class='a' style='left:57.800px;top:473.5px' width='6' height='8' viewBox='0 0 6 8'><path d='M0.800 0.500L4.600 4 0.800 7.500' stroke='#454b5a' stroke-width='1.200' fill='none'/></svg>
<svg class='a' style='left:73.70px;top:471.00px;color:#454b5a' width='15.50' height='13.70' viewBox='1.8 2.0 20.70 21.00' preserveAspectRatio='none' fill='#454b5a'><path d='M10 2l6 .5 6.500 6.500-2.500 2.500-2-2-1.500 1.500L14 8.500l-1-3.500z'/><path d='M12.500 9l3 3L5 23l-3.200-3z'/></svg>
<div class='t' style='top:472.74px;font-size:12px;color:#4b5060;letter-spacing:0.181px;left:92.90px;'>Production</div>
<svg class='a' style='left:57.800px;top:497.5px' width='6' height='8' viewBox='0 0 6 8'><path d='M0.800 0.500L4.600 4 0.800 7.500' stroke='#454b5a' stroke-width='1.200' fill='none'/></svg>
<svg class='a' style='left:73.30px;top:499.00px;color:#454b5a' width='17.40' height='9.40' viewBox='0.0 7.5 24.10 15.00' preserveAspectRatio='none' fill='#454b5a'><circle cx='3.200' cy='19' r='2' fill='none' stroke='currentColor' stroke-width='1.800'/><circle cx='8.200' cy='19' r='2' fill='none' stroke='currentColor' stroke-width='1.800'/><path d='M0 14.500h18.500v2.600H0z'/><rect x='17.500' y='8.500' width='5.600' height='13' rx='2.800' fill='none' stroke='currentColor' stroke-width='2'/><path d='M17.500 13.500h5.600v3.800h-5.600z'/></svg>
<div class='t' style='top:496.74px;font-size:12px;color:#4b5060;letter-spacing:-0.054px;left:92.90px;'>Expéditions</div>
<svg class='a' style='left:57.800px;top:521.5px' width='6' height='8' viewBox='0 0 6 8'><path d='M0.800 0.500L4.600 4 0.800 7.500' stroke='#454b5a' stroke-width='1.200' fill='none'/></svg>
<svg class='a' style='left:73.30px;top:522.60px;color:#454b5a' width='17.40' height='9.10' viewBox='0.0 7.5 24.10 15.00' preserveAspectRatio='none' fill='#454b5a'><circle cx='3.200' cy='19' r='2' fill='none' stroke='currentColor' stroke-width='1.800'/><circle cx='8.200' cy='19' r='2' fill='none' stroke='currentColor' stroke-width='1.800'/><path d='M0 14.500h18.500v2.600H0z'/><rect x='17.500' y='8.500' width='5.600' height='13' rx='2.800' fill='none' stroke='currentColor' stroke-width='2'/><path d='M17.500 13.500h5.600v3.800h-5.600z'/></svg>
<div class='t' style='top:520.74px;font-size:12px;color:#4b5060;letter-spacing:0.065px;left:92.90px;'>Conditionnements</div>
<svg class='a' style='left:57.800px;top:545.5px' width='6' height='8' viewBox='0 0 6 8'><path d='M0.800 0.500L4.600 4 0.800 7.500' stroke='#454b5a' stroke-width='1.200' fill='none'/></svg>
<svg class='a' style='left:74.00px;top:544.40px;color:#454b5a' width='14.80' height='11.30' viewBox='1.0 4.0 22.00 17.00' preserveAspectRatio='none' fill='#454b5a'><path d='M12 4a9 9 0 0 1 9 9v3.500H3V13a9 9 0 0 1 9-9z'/><path d='M9.500 4.500v7M14.500 4.500v7' stroke='#fff' stroke-width='1.200'/><path d='M1 17.500h22V20a1 1 0 0 1-1 1H2a1 1 0 0 1-1-1z'/></svg>
<div class='t' style='top:544.74px;font-size:12px;color:#4b5060;letter-spacing:-0.617px;left:92.90px;'>Pose</div>
<svg class='a' style='left:57.800px;top:569.5px' width='6' height='8' viewBox='0 0 6 8'><path d='M0.800 0.500L4.600 4 0.800 7.500' stroke='#454b5a' stroke-width='1.200' fill='none'/></svg>
<svg class='a' style='left:75.00px;top:568.00px;color:#454b5a' width='13.80' height='12.00' viewBox='0.0 1.0 24.00 21.50' preserveAspectRatio='none' fill='#454b5a'><path d='M12 1.500L23.500 22H.5z' stroke='currentColor' stroke-width='1' stroke-linejoin='round'/><path d='M12 8.500v7' stroke='#fff' stroke-width='2.400' stroke-linecap='round'/><circle cx='12' cy='18.800' r='1.400' fill='#fff'/></svg>
<div class='t' style='top:568.74px;font-size:12px;color:#4b5060;letter-spacing:-0.961px;left:92.90px;'>SAV</div>
<svg class='a' style='left:57.800px;top:593.5px' width='6' height='8' viewBox='0 0 6 8'><path d='M0.800 0.500L4.600 4 0.800 7.500' stroke='#454b5a' stroke-width='1.200' fill='none'/></svg>
<svg class='a' style='left:74.60px;top:591.70px;color:#454b5a' width='14.60' height='12.30' viewBox='1.5 2.0 21.00 19.50' preserveAspectRatio='none' fill='#454b5a'><path d='M6 2h4v4H6zM14 2h4v4h-4z'/><path d='M5.500 7h5v14.500H1.500V17zM18.500 7h-5v14.500h9V17z'/><path d='M10.500 9h3v6h-3z'/></svg>
<div class='t' style='top:592.74px;font-size:12px;color:#4b5060;letter-spacing:0.033px;left:92.90px;'>Planification</div>
<svg class='a' style='left:57.800px;top:617.5px' width='6' height='8' viewBox='0 0 6 8'><path d='M0.800 0.500L4.600 4 0.800 7.500' stroke='#454b5a' stroke-width='1.200' fill='none'/></svg>
<svg class='a' style='left:74.60px;top:616.00px;color:#454b5a' width='14.20' height='12.30' viewBox='1.3 2.0 21.20 19.70' preserveAspectRatio='none' fill='#454b5a'><path d='M2.500 2v18.500h20' fill='none' stroke='currentColor' stroke-width='2.400'/><path d='M7.500 12v6M11.500 8v10M15.500 10.500v7.500M19.500 5.500v12.500' stroke='currentColor' stroke-width='2.400'/></svg>
<div class='t' style='top:616.74px;font-size:12px;color:#4b5060;letter-spacing:0.073px;left:92.90px;'>Comptabilité</div>
<svg class='a' style='left:57.800px;top:641.5px' width='6' height='8' viewBox='0 0 6 8'><path d='M0.800 0.500L4.600 4 0.800 7.500' stroke='#454b5a' stroke-width='1.200' fill='none'/></svg>
<svg class='a' style='left:76.00px;top:639.00px;color:#454b5a' width='11.50' height='14.00' viewBox='3.0 1.0 18.00 22.00' preserveAspectRatio='none' fill='#454b5a'><circle cx='12' cy='14' r='9'/><path d='M9.500 1h5v2.500h-5zM18.500 4.500l2 2-1.800 1.800-2-2z'/><path d='M12 8.500v6' stroke='#fff' stroke-width='2.200' stroke-linecap='round'/></svg>
<div class='t' style='top:640.74px;font-size:12px;color:#4b5060;letter-spacing:-0.247px;left:92.90px;'>Suivi des Temps</div>
<svg class='a' style='left:57.800px;top:665.5px' width='6' height='8' viewBox='0 0 6 8'><path d='M0.800 0.500L4.600 4 0.800 7.500' stroke='#454b5a' stroke-width='1.200' fill='none'/></svg>
<svg class='a' style='left:75.60px;top:663.30px;color:#454b5a' width='13.60' height='13.70' viewBox='1.0 0.6 23.50 22.40' preserveAspectRatio='none' fill='#454b5a'><path d='M1 12.500h5.500l1.500 2.500h8l1.500-2.500H23V21.500Q23 23 21.500 23h-19Q1 23 1 21.500z'/><path d='M2.200 12V7.500h6.300' fill='none' stroke='currentColor' stroke-width='2.400'/><path d='M8.500 13.500L16.200 6a4.300 4.300 0 0 1 5.300-5.300l-2.700 2.700.6 2.200 2.200.6 2.700-2.700A4.300 4.300 0 0 1 19 8.800L12.500 15.500H9z'/></svg>
<div class='t' style='top:664.74px;font-size:12px;color:#4b5060;letter-spacing:-0.186px;left:92.90px;'>Données Techniques</div>
<svg class='a' style='left:57.800px;top:689.5px' width='6' height='8' viewBox='0 0 6 8'><path d='M0.800 0.500L4.600 4 0.800 7.500' stroke='#454b5a' stroke-width='1.200' fill='none'/></svg>
<svg class='a' style='left:75.00px;top:687.40px;color:#454b5a' width='12.90' height='13.80' viewBox='0.0 1.0 24.00 22.00' preserveAspectRatio='none' fill='#454b5a'><path d='M10 1h4l.6 3.100 1.900.8 2.600-1.800 2.800 2.800-1.800 2.600.8 1.900 3.100.6v4l-3.100.6-.8 1.900 1.800 2.600-2.800 2.800-2.600-1.800-1.900.8L14 23h-4l-.6-3.100-1.900-.8-2.600 1.800-2.800-2.800 1.800-2.600-.8-1.900L0 14v-4l3.100-.6.8-1.900-1.800-2.600 2.800-2.800 2.600 1.800 1.900-.8z'/><circle cx='12' cy='12' r='4' fill='#fff'/></svg>
<div class='t' style='top:688.74px;font-size:12px;color:#4b5060;letter-spacing:0.110px;left:92.90px;'>Configuration</div>
<svg class='a' style='left:57.800px;top:713.5px' width='6' height='8' viewBox='0 0 6 8'><path d='M0.800 0.500L4.600 4 0.800 7.500' stroke='#454b5a' stroke-width='1.200' fill='none'/></svg>
<svg class='a' style='left:74.60px;top:711.25px;color:#454b5a' width='14.80' height='13.65' viewBox='1.9 1.2 20.60 20.70' preserveAspectRatio='none' fill='#454b5a'><path d='M22.500 6.500a6 6 0 0 1-8 5.800L5.500 21.500a2.300 2.300 0 0 1-3.200-3.200l9.200-9A6 6 0 0 1 19 1.500l-3.800 3.800.6 2.900 2.900.6z'/></svg>
<div class='t' style='top:712.74px;font-size:12px;color:#4b5060;letter-spacing:-0.004px;left:92.90px;'>Admin</div>
<svg class='a' style='left:57.800px;top:737.5px' width='6' height='8' viewBox='0 0 6 8'><path d='M0.800 0.500L4.600 4 0.800 7.500' stroke='#454b5a' stroke-width='1.200' fill='none'/></svg>
<svg class='a' style='left:75.00px;top:735.70px;color:#454b5a' width='14.20' height='12.50' viewBox='0.0 1.0 24.00 21.50' preserveAspectRatio='none' fill='#454b5a'><path d='M12 1.500L23.500 22H.5z' stroke='currentColor' stroke-width='1' stroke-linejoin='round'/><path d='M12 8.500v7' stroke='#fff' stroke-width='2.400' stroke-linecap='round'/><circle cx='12' cy='18.800' r='1.400' fill='#fff'/></svg>
<div class='t' style='top:736.74px;font-size:12px;color:#4b5060;letter-spacing:-0.016px;left:92.90px;'>Administration des données</div>
<svg class='a' style='left:57.800px;top:761.5px' width='6' height='8' viewBox='0 0 6 8'><path d='M0.800 0.500L4.600 4 0.800 7.500' stroke='#454b5a' stroke-width='1.200' fill='none'/></svg>
<svg class='a' style='left:74.60px;top:759.90px;color:#454b5a' width='14.20' height='12.00' viewBox='1.0 3.5 22.00 17.50' preserveAspectRatio='none' fill='#454b5a'><path d='M2.500 3.500h7l2.500 2.500h9.500A1.500 1.500 0 0 1 23 7.500v12a1.500 1.500 0 0 1-1.500 1.500h-19A1.500 1.500 0 0 1 1 19.500V5a1.500 1.500 0 0 1 1.500-1.500z'/></svg>
<div class='t' style='top:760.74px;font-size:12px;color:#4b5060;letter-spacing:-0.239px;left:92.90px;'>Archivage</div>
<div class='a' style='left:398px;top:160px;width:1522px;height:864px;background:#dae3ec;'></div>
<div class='a' style='left:398px;top:160px;width:6px;height:864px;background:#dbe4ee;'></div>
<div class='a' style='left:401px;top:160px;width:1px;height:864px;background:#c6dcfa;'></div>
<div class='a' style='left:404px;top:204px;width:1px;height:820px;background:#f3f5f8;'></div>
<svg class='a' style='left:398px;top:581px' width='5' height='22' viewBox='0 0 5 22'><g fill='#2065d4'><rect x='2' y='1' width='1.200' height='1.200'/><rect x='1' y='2' width='1.200' height='1.200'/><rect x='2' y='5' width='1.200' height='1.200'/><rect x='1' y='6' width='1.200' height='1.200'/><rect x='2' y='9' width='1.200' height='1.200'/><rect x='1' y='10' width='1.200' height='1.200'/><rect x='2' y='13' width='1.200' height='1.200'/><rect x='1' y='14' width='1.200' height='1.200'/><rect x='2' y='17' width='1.200' height='1.200'/><rect x='1' y='18' width='1.200' height='1.200'/></g><g fill='#f4f7fb'><rect x='2' y='3' width='1' height='1'/><rect x='2' y='7' width='1' height='1'/><rect x='2' y='11' width='1' height='1'/><rect x='2' y='15' width='1' height='1'/><rect x='2' y='19' width='1' height='1'/></g></svg>
<div class='a' style='left:407px;top:162px;width:30.5px;height:23px;background:#fff;border-radius:7px 7px 0 0'></div>
<svg class='a' style='left:416.00px;top:167.00px;color:#454b5a' width='13.30' height='11.80' viewBox='1.1 2.5 21.80 19.00' preserveAspectRatio='none' fill='#454b5a'><path d='M12 2.500L1 12h3v9.500h6V15h4v6.500h6V12h3l-4-3.500V4h-3v2z'/></svg>
<div class='a' style='left:442.7px;top:161.2px;width:94.6px;height:24px;background:#1a98a3;border-radius:8px 8px 0 0'></div>
<svg class='a' style='left:447.25px;top:168.00px;color:#fff' width='14.55' height='12.00' viewBox='0.0 2.4 24.00 19.10' preserveAspectRatio='none' fill='#fff'><circle cx='12' cy='8.500' r='3.800'/><path d='M5 21.500v-2.500a5 5 0 0 1 5-5h4a5 5 0 0 1 5 5v2.500z'/><circle cx='4.500' cy='5' r='2.600'/><circle cx='19.500' cy='5' r='2.600'/><path d='M0 13.500v-1.500a3.500 3.500 0 0 1 3.500-3.500h2.500a4 4 0 0 1 1.500.3 5.500 5.500 0 0 0 .8 4.700zM24 13.500v-1.500a3.500 3.500 0 0 0-3.500-3.500h-2.500a4 4 0 0 0-1.500.3 5.500 5.500 0 0 1-.8 4.700z'/></svg>
<div class='t' style='top:167.00px;font-size:13px;color:#fff;letter-spacing:0.094px;left:467.10px;'>Clients</div>
<svg class='a' style='left:522px;top:170.800px' width='8' height='8' viewBox='0 0 8 8'><path d='M0.600 0.600l6.800 6.800M7.400 0.600l-6.800 6.800' stroke='#fff' stroke-width='1.500'/></svg>
<div class='a' style='left:404px;top:184px;width:1516px;height:20px;background:#1a98a3;'></div>
<svg class='a' style='left:414.30px;top:189.25px;color:#fff' width='14.70' height='11.75' viewBox='0.0 2.4 24.00 19.10' preserveAspectRatio='none' fill='#fff'><circle cx='12' cy='8.500' r='3.800'/><path d='M5 21.500v-2.500a5 5 0 0 1 5-5h4a5 5 0 0 1 5 5v2.500z'/><circle cx='4.500' cy='5' r='2.600'/><circle cx='19.500' cy='5' r='2.600'/><path d='M0 13.500v-1.500a3.500 3.500 0 0 1 3.500-3.500h2.500a4 4 0 0 1 1.500.3 5.500 5.500 0 0 0 .8 4.700zM24 13.500v-1.500a3.500 3.500 0 0 0-3.500-3.500h-2.500a4 4 0 0 0-1.500.3 5.500 5.500 0 0 1-.8 4.700z'/></svg>
<div class='t' style='top:188.84px;font-size:12px;color:#fff;letter-spacing:-0.163px;left:439.15px;'>Clients</div>
<svg class='a' style='left:1906px;top:165px' width='14' height='15' viewBox='0 0 14 15'><path d='M1.500 1.200l6 6-6 6M7.700 1.200l6 6-6 6' stroke='#3d4150' stroke-width='1.500' fill='none'/></svg>
<svg class='a' style='left:1883px;top:187px' width='37' height='15' viewBox='0 0 37 15'><path d='M1 8.100h13' stroke='#d9f0f2' stroke-width='1.800' fill='none'/><path d='M10.300 3.800l4.300 4.300-4.300 4.300M17.500 2.800v10.300M31.700 2v9.300M27.900 7.500l3.800 3.800 3.800-3.800M26.700 13.600h10' stroke='#fff' stroke-width='1.300' fill='none'/></svg>
<div class='a' style='left:405px;top:205px;width:760px;height:788px;background:#fff;border:1px solid #6f737c;overflow:hidden'>
<div class='a' style='left:0;top:0;width:33px;height:18px;background:#a9c4e9;border-right:1px solid #8fa9cc;border-bottom:1px solid #8fa9cc'></div>
<svg class='a' style='left:20px;top:5px' width='8' height='9' viewBox='0 0 8 9'><path d='M8 0.500v8h-8z' fill='#dce7f6'/></svg>
<div class='gh' style='left:33px;width:49px;background:linear-gradient(#fbdb96,#f9d07e 50%,#f6c66b);border-right:1px solid #e8a852;border-bottom:1px solid #f29536'></div>
<div class='gh' style='left:82px;width:49px'></div>
<div class='gh' style='left:131px;width:129px'></div>
<div class='gh' style='left:260px;width:41px'></div>
<div class='gh' style='left:301px;width:209px'></div>
<div class='gh' style='left:510px;width:49px'></div>
<div class='gh' style='left:559px;width:65px'></div>
<div class='row' style='top:18px'>
<div class='rh' style='background:#fdd58c;border-color:#f3a04a'></div>
<div class='c' style='left:33px;width:48px;background:#fff'><span>000001</span></div>
<div class='c' style='left:82px;width:48px;background:#fff'><span>0</span></div>
<div class='c' style='left:131px;width:128px;background:#fff'><span>BIGMAT BLOIS</span></div>
<div class='c' style='left:260px;width:40px;background:#fff'><span>01120</span></div>
<div class='c' style='left:301px;width:208px;background:#ccffff'><span>MONTLUEL</span></div>
<div class='c' style='left:510px;width:48px;background:#fff'><span>Pro</span></div>
<div class='c' style='left:559px;width:64px;background:#fff'><span>NORD</span></div>
</div>
<div class='row' style='top:34px'>
<div class='rh'></div>
<div class='c' style='left:33px;width:48px;background:#f0f0f0'><span>000042</span></div>
<div class='c' style='left:82px;width:48px;background:#f0f0f0'><span>0</span></div>
<div class='c' style='left:131px;width:128px;background:#f0f0f0'><span>BRICO MONT DE MARSAN</span></div>
<div class='c' style='left:260px;width:40px;background:#f0f0f0'><span>40000</span></div>
<div class='c' style='left:301px;width:208px;background:#ccffff'><span>MONT-DE-MARSAN</span></div>
<div class='c' style='left:510px;width:48px;background:#f0f0f0'></div>
<div class='c' style='left:559px;width:64px;background:#f0f0f0'><span>SUD</span></div>
</div>
<div class='row' style='top:50px'>
<div class='rh'></div>
<div class='c' style='left:33px;width:48px;background:#fff'><span>000049</span></div>
<div class='c' style='left:82px;width:48px;background:#fff'><span>0</span></div>
<div class='c' style='left:131px;width:128px;background:#fff'><span>BPA MENUISERIE</span></div>
<div class='c' style='left:260px;width:40px;background:#fff'><span>66330</span></div>
<div class='c' style='left:301px;width:208px;background:#ccffff'><span>CABESTANY</span></div>
<div class='c' style='left:510px;width:48px;background:#fff'></div>
<div class='c' style='left:559px;width:64px;background:#fff'><span>SUD</span></div>
</div>
<div class='row' style='top:66px'>
<div class='rh'></div>
<div class='c' style='left:33px;width:48px;background:#f0f0f0'><span>000052</span></div>
<div class='c' style='left:82px;width:48px;background:#f0f0f0'><span>0</span></div>
<div class='c' style='left:131px;width:128px;background:#f0f0f0'><span>MENUISERIE JUILLAN</span></div>
<div class='c' style='left:260px;width:40px;background:#f0f0f0'><span>65290</span></div>
<div class='c' style='left:301px;width:208px;background:#ccffff'><span>juillan</span></div>
<div class='c' style='left:510px;width:48px;background:#f0f0f0'></div>
<div class='c' style='left:559px;width:64px;background:#f0f0f0'><span>SUD</span></div>
</div>
<div class='row' style='top:82px'>
<div class='rh'></div>
<div class='c' style='left:33px;width:48px;background:#cc3333;color:#fff'><span>000053</span></div>
<div class='c' style='left:82px;width:48px;background:#cc3333;color:#fff'><span>0</span></div>
<div class='c' style='left:131px;width:128px;background:#cc3333;color:#fff'><span>TEST LMT</span></div>
<div class='c' style='left:260px;width:40px;background:#cc3333;color:#fff'></div>
<div class='c' style='left:301px;width:208px;background:#cc3333;color:#fff'></div>
<div class='c' style='left:510px;width:48px;background:#cc3333;color:#fff'></div>
<div class='c' style='left:559px;width:64px;background:#cc3333;color:#fff'><span>COMTEST</span></div>
</div>
<div class='row' style='top:98px'>
<div class='rh'></div>
<div class='c' style='left:33px;width:48px;background:#f0f0f0'><span>000054</span></div>
<div class='c' style='left:82px;width:48px;background:#f0f0f0'><span>0</span></div>
<div class='c' style='left:131px;width:128px;background:#f0f0f0'><span>CAN 22265 1</span></div>
<div class='c' style='left:260px;width:40px;background:#f0f0f0'><span>65000</span></div>
<div class='c' style='left:301px;width:208px;background:#ccffff'><span>TARBES</span></div>
<div class='c' style='left:510px;width:48px;background:#f0f0f0'></div>
<div class='c' style='left:559px;width:64px;background:#f0f0f0'><span>COMTEST</span></div>
</div>
<div class='row' style='top:114px'>
<div class='rh'></div>
<div class='c' style='left:33px;width:48px;background:#fff'><span>000074</span></div>
<div class='c' style='left:82px;width:48px;background:#fff'><span>0</span></div>
<div class='c' style='left:131px;width:128px;background:#fff'><span>TEST CBS</span></div>
<div class='c' style='left:260px;width:40px;background:#fff'><span>65000</span></div>
<div class='c' style='left:301px;width:208px;background:#ccffff'><span>Tarbes</span></div>
<div class='c' style='left:510px;width:48px;background:#fff'></div>
<div class='c' style='left:559px;width:64px;background:#fff'><span>COMTEST</span></div>
</div>
<div class='row' style='top:130px'>
<div class='rh'></div>
<div class='c' style='left:33px;width:48px;background:#f0f0f0'><span>000076</span></div>
<div class='c' style='left:82px;width:48px;background:#f0f0f0'><span>0</span></div>
<div class='c' style='left:131px;width:128px;background:#f0f0f0'><span>TEST ADRESSE</span></div>
<div class='c' style='left:260px;width:40px;background:#f0f0f0'><span>87000</span></div>
<div class='c' style='left:301px;width:208px;background:#ccffff'><span>LIMOGES</span></div>
<div class='c' style='left:510px;width:48px;background:#f0f0f0'></div>
<div class='c' style='left:559px;width:64px;background:#f0f0f0'><span>CAN</span></div>
</div>
<div class='row' style='top:146px'>
<div class='rh'></div>
<div class='c' style='left:33px;width:48px;background:#cc3333;color:#fff'><span>000085</span></div>
<div class='c' style='left:82px;width:48px;background:#cc3333;color:#fff'><span>0</span></div>
<div class='c' style='left:131px;width:128px;background:#cc3333;color:#fff'><span>TEST CP ADR</span></div>
<div class='c' style='left:260px;width:40px;background:#cc3333;color:#fff'><span>65000</span></div>
<div class='c' style='left:301px;width:208px;background:#cc3333;color:#fff'><span>TARBES</span></div>
<div class='c' style='left:510px;width:48px;background:#cc3333;color:#fff'></div>
<div class='c' style='left:559px;width:64px;background:#cc3333;color:#fff'><span>CAN</span></div>
</div>
<div class='row' style='top:162px'>
<div class='rh'></div>
<div class='c' style='left:33px;width:48px;background:#f0f0f0'><span>000090</span></div>
<div class='c' style='left:82px;width:48px;background:#f0f0f0'><span>0</span></div>
<div class='c' style='left:131px;width:128px;background:#f0f0f0'><span>TEST LBE</span></div>
<div class='c' style='left:260px;width:40px;background:#f0f0f0'></div>
<div class='c' style='left:301px;width:208px;background:#ccffff'></div>
<div class='c' style='left:510px;width:48px;background:#f0f0f0'></div>
<div class='c' style='left:559px;width:64px;background:#f0f0f0'><span>CAN</span></div>
</div>
<div class='row' style='top:178px'>
<div class='rh'></div>
<div class='c' style='left:33px;width:48px;background:#fff'><span>000093</span></div>
<div class='c' style='left:82px;width:48px;background:#fff'><span>0</span></div>
<div class='c' style='left:131px;width:128px;background:#fff'><span>TEST FTT</span></div>
<div class='c' style='left:260px;width:40px;background:#fff'></div>
<div class='c' style='left:301px;width:208px;background:#ccffff'></div>
<div class='c' style='left:510px;width:48px;background:#fff'></div>
<div class='c' style='left:559px;width:64px;background:#fff'><span>SUD</span></div>
</div>
<div class='row' style='top:194px'>
<div class='rh'></div>
<div class='c' style='left:33px;width:48px;background:#f0f0f0'><span>000095</span></div>
<div class='c' style='left:82px;width:48px;background:#f0f0f0'><span>0</span></div>
<div class='c' style='left:131px;width:128px;background:#f0f0f0'><span>C</span></div>
<div class='c' style='left:260px;width:40px;background:#f0f0f0'></div>
<div class='c' style='left:301px;width:208px;background:#ccffff'></div>
<div class='c' style='left:510px;width:48px;background:#f0f0f0'></div>
<div class='c' style='left:559px;width:64px;background:#f0f0f0'><span>SUD</span></div>
</div>
<div class='row' style='top:210px'>
<div class='rh'></div>
<div class='c' style='left:33px;width:48px;background:#fff'><span>000096</span></div>
<div class='c' style='left:82px;width:48px;background:#fff'><span>0</span></div>
<div class='c' style='left:131px;width:128px;background:#fff'><span>TEST FTT</span></div>
<div class='c' style='left:260px;width:40px;background:#fff'></div>
<div class='c' style='left:301px;width:208px;background:#ccffff'></div>
<div class='c' style='left:510px;width:48px;background:#fff'></div>
<div class='c' style='left:559px;width:64px;background:#fff'><span>COMTEST</span></div>
</div>
<div class='row' style='top:226px'>
<div class='rh'></div>
<div class='c' style='left:33px;width:48px;background:#f0f0f0'><span>000098</span></div>
<div class='c' style='left:82px;width:48px;background:#f0f0f0'><span>0</span></div>
<div class='c' style='left:131px;width:128px;background:#f0f0f0'><span>BENOIT MORANDET</span></div>
<div class='c' style='left:260px;width:40px;background:#f0f0f0'></div>
<div class='c' style='left:301px;width:208px;background:#ccffff'></div>
<div class='c' style='left:510px;width:48px;background:#f0f0f0'></div>
<div class='c' style='left:559px;width:64px;background:#f0f0f0'><span>NORD</span></div>
</div>
<div class='row' style='top:242px'>
<div class='rh'></div>
<div class='c' style='left:33px;width:48px;background:#fff'><span>000100</span></div>
<div class='c' style='left:82px;width:48px;background:#fff'><span>0</span></div>
<div class='c' style='left:131px;width:128px;background:#fff'><span>TEST FTT3</span></div>
<div class='c' style='left:260px;width:40px;background:#fff'></div>
<div class='c' style='left:301px;width:208px;background:#ccffff'></div>
<div class='c' style='left:510px;width:48px;background:#fff'></div>
<div class='c' style='left:559px;width:64px;background:#fff'><span>CAN</span></div>
</div>
<div class='row' style='top:258px'>
<div class='rh'></div>
<div class='c' style='left:33px;width:48px;background:#f0f0f0'><span>000101</span></div>
<div class='c' style='left:82px;width:48px;background:#f0f0f0'><span>0</span></div>
<div class='c' style='left:131px;width:128px;background:#f0f0f0'><span>MENUISERIE DES LILAS</span></div>
<div class='c' style='left:260px;width:40px;background:#f0f0f0'><span>65000</span></div>
<div class='c' style='left:301px;width:208px;background:#ccffff'><span>TARBES</span></div>
<div class='c' style='left:510px;width:48px;background:#f0f0f0'></div>
<div class='c' style='left:559px;width:64px;background:#f0f0f0'><span>CAN</span></div>
</div>
<div class='row' style='top:274px'>
<div class='rh'></div>
<div class='c' style='left:33px;width:48px;background:#fff'><span>000102</span></div>
<div class='c' style='left:82px;width:48px;background:#fff'><span>0</span></div>
<div class='c' style='left:131px;width:128px;background:#fff'><span>MENUISERIES GAC</span></div>
<div class='c' style='left:260px;width:40px;background:#fff'><span>01120</span></div>
<div class='c' style='left:301px;width:208px;background:#ccffff'><span>MONTLUEL</span></div>
<div class='c' style='left:510px;width:48px;background:#fff'><span>Pro</span></div>
<div class='c' style='left:559px;width:64px;background:#fff'><span>NORD</span></div>
</div>
<div class='row' style='top:290px'>
<div class='rh'></div>
<div class='c' style='left:33px;width:48px;background:#f0f0f0'><span>000103</span></div>
<div class='c' style='left:82px;width:48px;background:#f0f0f0'><span>0</span></div>
<div class='c' style='left:131px;width:128px;background:#f0f0f0'><span>MLE</span></div>
<div class='c' style='left:260px;width:40px;background:#f0f0f0'><span>65000</span></div>
<div class='c' style='left:301px;width:208px;background:#ccffff'><span>TARBES</span></div>
<div class='c' style='left:510px;width:48px;background:#f0f0f0'></div>
<div class='c' style='left:559px;width:64px;background:#f0f0f0'><span>COMTEST</span></div>
</div>
<div class='row' style='top:306px'>
<div class='rh'></div>
<div class='c' style='left:33px;width:48px;background:#fff'><span>000113</span></div>
<div class='c' style='left:82px;width:48px;background:#fff'><span>0</span></div>
<div class='c' style='left:131px;width:128px;background:#fff'><span>C</span></div>
<div class='c' style='left:260px;width:40px;background:#fff'><span>10200</span></div>
<div class='c' style='left:301px;width:208px;background:#ccffff'><span>BAR-SUR-AUBE</span></div>
<div class='c' style='left:510px;width:48px;background:#fff'><span>NEGO</span></div>
<div class='c' style='left:559px;width:64px;background:#fff'><span>NORD</span></div>
</div>
<div class='row' style='top:322px'>
<div class='rh'></div>
<div class='c' style='left:33px;width:48px;background:#f0f0f0'><span>000119</span></div>
<div class='c' style='left:82px;width:48px;background:#f0f0f0'><span>0</span></div>
<div class='c' style='left:131px;width:128px;background:#f0f0f0'><span>ETS DUBOIS</span></div>
<div class='c' style='left:260px;width:40px;background:#f0f0f0'></div>
<div class='c' style='left:301px;width:208px;background:#ccffff'></div>
<div class='c' style='left:510px;width:48px;background:#f0f0f0'></div>
<div class='c' style='left:559px;width:64px;background:#f0f0f0'><span>ADUPONT</span></div>
</div>
<div class='row' style='top:338px'>
<div class='rh'></div>
<div class='c' style='left:33px;width:48px;background:#fff'><span>000123</span></div>
<div class='c' style='left:82px;width:48px;background:#fff'><span>0</span></div>
<div class='c' style='left:131px;width:128px;background:#fff'><span>TEST GAC</span></div>
<div class='c' style='left:260px;width:40px;background:#fff'></div>
<div class='c' style='left:301px;width:208px;background:#ccffff'></div>
<div class='c' style='left:510px;width:48px;background:#fff'></div>
<div class='c' style='left:559px;width:64px;background:#fff'><span>ADUPONT</span></div>
</div>
<div class='row' style='top:354px'>
<div class='rh'></div>
<div class='c' style='left:33px;width:48px;background:#cc3333;color:#fff'><span>000124</span></div>
<div class='c' style='left:82px;width:48px;background:#cc3333;color:#fff'><span>0</span></div>
<div class='c' style='left:131px;width:128px;background:#cc3333;color:#fff'><span>TREST</span></div>
<div class='c' style='left:260px;width:40px;background:#cc3333;color:#fff'><span>02100</span></div>
<div class='c' style='left:301px;width:208px;background:#cc3333;color:#fff'><span>SAINT QUENTIN</span></div>
<div class='c' style='left:510px;width:48px;background:#cc3333;color:#fff'></div>
<div class='c' style='left:559px;width:64px;background:#cc3333;color:#fff'><span>ADUPONT</span></div>
</div>
<div class='row' style='top:370px'>
<div class='rh'></div>
<div class='c' style='left:33px;width:48px;background:#fff'><span>000125</span></div>
<div class='c' style='left:82px;width:48px;background:#fff'><span>0</span></div>
<div class='c' style='left:131px;width:128px;background:#fff'><span>MENUISERIE JUILLANAISE</span></div>
<div class='c' style='left:260px;width:40px;background:#fff'><span>65290</span></div>
<div class='c' style='left:301px;width:208px;background:#ccffff'><span>JUILLAN</span></div>
<div class='c' style='left:510px;width:48px;background:#fff'></div>
<div class='c' style='left:559px;width:64px;background:#fff'><span>CAN</span></div>
</div>
<div class='row' style='top:386px'>
<div class='rh'></div>
<div class='c' style='left:33px;width:48px;background:#f0f0f0'><span>000126</span></div>
<div class='c' style='left:82px;width:48px;background:#f0f0f0'><span>0</span></div>
<div class='c' style='left:131px;width:128px;background:#f0f0f0'><span>FANNY</span></div>
<div class='c' style='left:260px;width:40px;background:#f0f0f0'><span>65290</span></div>
<div class='c' style='left:301px;width:208px;background:#ccffff'><span>JUILLAN</span></div>
<div class='c' style='left:510px;width:48px;background:#f0f0f0'></div>
<div class='c' style='left:559px;width:64px;background:#f0f0f0'><span>EST</span></div>
</div>
<div class='row' style='top:402px'>
<div class='rh'></div>
<div class='c' style='left:33px;width:48px;background:#fff'><span>000127</span></div>
<div class='c' style='left:82px;width:48px;background:#fff'><span>0</span></div>
<div class='c' style='left:131px;width:128px;background:#fff'><span>MENUISERIE DE JUILLAN</span></div>
<div class='c' style='left:260px;width:40px;background:#fff'><span>65290</span></div>
<div class='c' style='left:301px;width:208px;background:#ccffff'><span>Juillan</span></div>
<div class='c' style='left:510px;width:48px;background:#fff'></div>
<div class='c' style='left:559px;width:64px;background:#fff'><span>OUEST</span></div>
</div>
<div class='row' style='top:418px'>
<div class='rh'></div>
<div class='c' style='left:33px;width:48px;background:#f0f0f0'><span>000128</span></div>
<div class='c' style='left:82px;width:48px;background:#f0f0f0'><span>0</span></div>
<div class='c' style='left:131px;width:128px;background:#f0f0f0'><span>BIGMAT BLOIS</span></div>
<div class='c' style='left:260px;width:40px;background:#f0f0f0'><span>01120</span></div>
<div class='c' style='left:301px;width:208px;background:#ccffff'><span>MONTLUEL</span></div>
<div class='c' style='left:510px;width:48px;background:#f0f0f0'></div>
<div class='c' style='left:559px;width:64px;background:#f0f0f0'><span>OUEST</span></div>
</div>
<div class='row' style='top:434px'>
<div class='rh'></div>
<div class='c' style='left:33px;width:48px;background:#fff'><span>000129</span></div>
<div class='c' style='left:82px;width:48px;background:#fff'><span>0</span></div>
<div class='c' style='left:131px;width:128px;background:#fff'><span>MENUISERIE JUILLANAISE</span></div>
<div class='c' style='left:260px;width:40px;background:#fff'><span>65290</span></div>
<div class='c' style='left:301px;width:208px;background:#ccffff'><span>Juillan</span></div>
<div class='c' style='left:510px;width:48px;background:#fff'></div>
<div class='c' style='left:559px;width:64px;background:#fff'><span>OUEST</span></div>
</div>
<div class='row' style='top:450px'>
<div class='rh'></div>
<div class='c' style='left:33px;width:48px;background:#f0f0f0'><span>000130</span></div>
<div class='c' style='left:82px;width:48px;background:#f0f0f0'><span>0</span></div>
<div class='c' style='left:131px;width:128px;background:#f0f0f0'><span>ROBERT ALEXANDRE ENT</span></div>
<div class='c' style='left:260px;width:40px;background:#f0f0f0'><span>44420</span></div>
<div class='c' style='left:301px;width:208px;background:#ccffff'><span>PIRIAC SUR MER</span></div>
<div class='c' style='left:510px;width:48px;background:#f0f0f0'></div>
<div class='c' style='left:559px;width:64px;background:#f0f0f0'><span>EST</span></div>
</div>
<div class='row' style='top:466px'>
<div class='rh'></div>
<div class='c' style='left:33px;width:48px;background:#fff'><span>000131</span></div>
<div class='c' style='left:82px;width:48px;background:#fff'><span>0</span></div>
<div class='c' style='left:131px;width:128px;background:#fff'><span>TEST GAC 5</span></div>
<div class='c' style='left:260px;width:40px;background:#fff'></div>
<div class='c' style='left:301px;width:208px;background:#ccffff'></div>
<div class='c' style='left:510px;width:48px;background:#fff'></div>
<div class='c' style='left:559px;width:64px;background:#fff'><span>ADUPONT</span></div>
</div>
<div class='row' style='top:482px'>
<div class='rh'></div>
<div class='c' style='left:33px;width:48px;background:#f0f0f0'><span>GAC1</span></div>
<div class='c' style='left:82px;width:48px;background:#f0f0f0'><span>0</span></div>
<div class='c' style='left:131px;width:128px;background:#f0f0f0'><span>BIGMAT BLOIS</span></div>
<div class='c' style='left:260px;width:40px;background:#f0f0f0'><span>01120</span></div>
<div class='c' style='left:301px;width:208px;background:#ccffff'><span>MONTLUEL</span></div>
<div class='c' style='left:510px;width:48px;background:#f0f0f0'><span>AMOB</span></div>
<div class='c' style='left:559px;width:64px;background:#f0f0f0'><span>NORD</span></div>
</div>
<div class='row' style='top:498px'>
<div class='rh'></div>
<div class='c' style='left:33px;width:48px;background:#fff'><span>GAC2</span></div>
<div class='c' style='left:82px;width:48px;background:#fff'><span>0</span></div>
<div class='c' style='left:131px;width:128px;background:#fff'><span>BIGMAT BLOIS</span></div>
<div class='c' style='left:260px;width:40px;background:#fff'><span>01120</span></div>
<div class='c' style='left:301px;width:208px;background:#ccffff'><span>MONTLUEL</span></div>
<div class='c' style='left:510px;width:48px;background:#fff'><span>AMOB</span></div>
<div class='c' style='left:559px;width:64px;background:#fff'><span>TEST</span></div>
</div>
<div class='row' style='top:514px'>
<div class='rh'></div>
<div class='c' style='left:33px;width:48px;background:#f0f0f0'><span>000001</span></div>
<div class='c' style='left:82px;width:48px;background:#f0f0f0'><span>01</span></div>
<div class='c' style='left:131px;width:128px;background:#f0f0f0'><span>MAISONS D'EN FRANCE</span></div>
<div class='c' style='left:260px;width:40px;background:#f0f0f0'><span>65000</span></div>
<div class='c' style='left:301px;width:208px;background:#ccffff'><span>TARBES</span></div>
<div class='c' style='left:510px;width:48px;background:#f0f0f0'></div>
<div class='c' style='left:559px;width:64px;background:#f0f0f0'><span>COMTEST</span></div>
</div>
<div class='row' style='top:530px'>
<div class='rh'></div>
<div class='c' style='left:33px;width:48px;background:#fff'><span>000002</span></div>
<div class='c' style='left:82px;width:48px;background:#fff'><span>01</span></div>
<div class='c' style='left:131px;width:128px;background:#fff'><span>MAISONS D'EN FRANCE</span></div>
<div class='c' style='left:260px;width:40px;background:#fff'><span>13090</span></div>
<div class='c' style='left:301px;width:208px;background:#ccffff'><span>Aix-en-provence</span></div>
<div class='c' style='left:510px;width:48px;background:#fff'></div>
<div class='c' style='left:559px;width:64px;background:#fff'><span>SUD</span></div>
</div>
<div class='row' style='top:546px'>
<div class='rh'></div>
<div class='c' style='left:33px;width:48px;background:#cc3333;color:#fff'><span>000003</span></div>
<div class='c' style='left:82px;width:48px;background:#cc3333;color:#fff'><span>01</span></div>
<div class='c' style='left:131px;width:128px;background:#cc3333;color:#fff'><span>BIGMAT CAEN</span></div>
<div class='c' style='left:260px;width:40px;background:#cc3333;color:#fff'><span>47550</span></div>
<div class='c' style='left:301px;width:208px;background:#cc3333;color:#fff'><span>BOE</span></div>
<div class='c' style='left:510px;width:48px;background:#cc3333;color:#fff'><span>Pro</span></div>
<div class='c' style='left:559px;width:64px;background:#cc3333;color:#fff'><span>OUEST</span></div>
</div>
<div class='row' style='top:562px'>
<div class='rh'></div>
<div class='c' style='left:33px;width:48px;background:#fff'><span>000004</span></div>
<div class='c' style='left:82px;width:48px;background:#fff'><span>01</span></div>
<div class='c' style='left:131px;width:128px;background:#fff'><span>BIGMAT SIEGE</span></div>
<div class='c' style='left:260px;width:40px;background:#fff'><span>65000</span></div>
<div class='c' style='left:301px;width:208px;background:#ccffff'><span>Tarbes</span></div>
<div class='c' style='left:510px;width:48px;background:#fff'><span>Pro</span></div>
<div class='c' style='left:559px;width:64px;background:#fff'></div>
</div>
<div class='row' style='top:578px'>
<div class='rh'></div>
<div class='c' style='left:33px;width:48px;background:#f0f0f0'><span>000005</span></div>
<div class='c' style='left:82px;width:48px;background:#f0f0f0'><span>01</span></div>
<div class='c' style='left:131px;width:128px;background:#f0f0f0'><span>BIGMAT BROU</span></div>
<div class='c' style='left:260px;width:40px;background:#f0f0f0'><span>28160</span></div>
<div class='c' style='left:301px;width:208px;background:#ccffff'><span>BROU</span></div>
<div class='c' style='left:510px;width:48px;background:#f0f0f0'><span>Pro</span></div>
<div class='c' style='left:559px;width:64px;background:#f0f0f0'><span>NORD</span></div>
</div>
<div class='row' style='top:594px'>
<div class='rh'></div>
<div class='c' style='left:33px;width:48px;background:#fff'><span>000006</span></div>
<div class='c' style='left:82px;width:48px;background:#fff'><span>01</span></div>
<div class='c' style='left:131px;width:128px;background:#fff'><span>BIGMAT CANY</span></div>
<div class='c' style='left:260px;width:40px;background:#fff'><span>64000</span></div>
<div class='c' style='left:301px;width:208px;background:#ccffff'><span>PAU</span></div>
<div class='c' style='left:510px;width:48px;background:#fff'><span>Pro</span></div>
<div class='c' style='left:559px;width:64px;background:#fff'><span>NORD</span></div>
</div>
<div class='row' style='top:610px'>
<div class='rh'></div>
<div class='c' style='left:33px;width:48px;background:#cc3333;color:#fff'><span>000007</span></div>
<div class='c' style='left:82px;width:48px;background:#cc3333;color:#fff'><span>01</span></div>
<div class='c' style='left:131px;width:128px;background:#cc3333;color:#fff'><span>BIGMAT AUCH</span></div>
<div class='c' style='left:260px;width:40px;background:#cc3333;color:#fff'><span>32000</span></div>
<div class='c' style='left:301px;width:208px;background:#cc3333;color:#fff'><span>AUCH</span></div>
<div class='c' style='left:510px;width:48px;background:#cc3333;color:#fff'><span>Pro</span></div>
<div class='c' style='left:559px;width:64px;background:#cc3333;color:#fff'><span>SUD</span></div>
</div>
<div class='row' style='top:626px'>
<div class='rh'></div>
<div class='c' style='left:33px;width:48px;background:#fff'><span>000008</span></div>
<div class='c' style='left:82px;width:48px;background:#fff'><span>01</span></div>
<div class='c' style='left:131px;width:128px;background:#fff'><span>BIGMAT CAUDEBEC</span></div>
<div class='c' style='left:260px;width:40px;background:#fff'><span>76320</span></div>
<div class='c' style='left:301px;width:208px;background:#ccffff'><span>Caudebec-lès-Elbeuf</span></div>
<div class='c' style='left:510px;width:48px;background:#fff'><span>Pro</span></div>
<div class='c' style='left:559px;width:64px;background:#fff'><span>NORD</span></div>
</div>
<div class='row' style='top:642px'>
<div class='rh'></div>
<div class='c' style='left:33px;width:48px;background:#cc3333;color:#fff'><span>000009</span></div>
<div class='c' style='left:82px;width:48px;background:#cc3333;color:#fff'><span>01</span></div>
<div class='c' style='left:131px;width:128px;background:#cc3333;color:#fff'><span>BIGMAT AYTRE</span></div>
<div class='c' style='left:260px;width:40px;background:#cc3333;color:#fff'><span>17440</span></div>
<div class='c' style='left:301px;width:208px;background:#cc3333;color:#fff'><span>Aytre</span></div>
<div class='c' style='left:510px;width:48px;background:#cc3333;color:#fff'><span>Pro</span></div>
<div class='c' style='left:559px;width:64px;background:#cc3333;color:#fff'><span>OUEST</span></div>
</div>
<div class='row' style='top:658px'>
<div class='rh'></div>
<div class='c' style='left:33px;width:48px;background:#cc3333;color:#fff'><span>000010</span></div>
<div class='c' style='left:82px;width:48px;background:#cc3333;color:#fff'><span>01</span></div>
<div class='c' style='left:131px;width:128px;background:#cc3333;color:#fff'><span>BIGMAT CHAMBLY BROCHANT</span></div>
<div class='c' style='left:260px;width:40px;background:#cc3333;color:#fff'><span>65000</span></div>
<div class='c' style='left:301px;width:208px;background:#cc3333;color:#fff'><span>TARBES</span></div>
<div class='c' style='left:510px;width:48px;background:#cc3333;color:#fff'><span>Pro</span></div>
<div class='c' style='left:559px;width:64px;background:#cc3333;color:#fff'><span>NORD</span></div>
</div>
<div class='row' style='top:674px'>
<div class='rh'></div>
<div class='c' style='left:33px;width:48px;background:#cc3333;color:#fff'><span>000011</span></div>
<div class='c' style='left:82px;width:48px;background:#cc3333;color:#fff'><span>01</span></div>
<div class='c' style='left:131px;width:128px;background:#cc3333;color:#fff'><span>BIGMAT BATAILLE BRETEUIL</span></div>
<div class='c' style='left:260px;width:40px;background:#cc3333;color:#fff'><span>27160</span></div>
<div class='c' style='left:301px;width:208px;background:#cc3333;color:#fff'><span>BRETEUIL</span></div>
<div class='c' style='left:510px;width:48px;background:#cc3333;color:#fff'><span>Pro</span></div>
<div class='c' style='left:559px;width:64px;background:#cc3333;color:#fff'><span>NORD</span></div>
</div>
<div class='row' style='top:690px'>
<div class='rh'></div>
<div class='c' style='left:33px;width:48px;background:#fff'><span>000012</span></div>
<div class='c' style='left:82px;width:48px;background:#fff'><span>01</span></div>
<div class='c' style='left:131px;width:128px;background:#fff'><span>BIGMAT BATAILLE LISIEUX</span></div>
<div class='c' style='left:260px;width:40px;background:#fff'><span>14100</span></div>
<div class='c' style='left:301px;width:208px;background:#ccffff'><span>Lisieux</span></div>
<div class='c' style='left:510px;width:48px;background:#fff'><span>Pro</span></div>
<div class='c' style='left:559px;width:64px;background:#fff'><span>NORD</span></div>
</div>
<div class='row' style='top:706px'>
<div class='rh'></div>
<div class='c' style='left:33px;width:48px;background:#cc3333;color:#fff'><span>000013</span></div>
<div class='c' style='left:82px;width:48px;background:#cc3333;color:#fff'><span>01</span></div>
<div class='c' style='left:131px;width:128px;background:#cc3333;color:#fff'><span>BIGMAT CHAMPAGNE-LES-MARAIS</span></div>
<div class='c' style='left:260px;width:40px;background:#cc3333;color:#fff'><span>85450</span></div>
<div class='c' style='left:301px;width:208px;background:#cc3333;color:#fff'><span>CHAMPAGNE-LES-MARAIS</span></div>
<div class='c' style='left:510px;width:48px;background:#cc3333;color:#fff'><span>Pro</span></div>
<div class='c' style='left:559px;width:64px;background:#cc3333;color:#fff'><span>OUEST</span></div>
</div>
<div class='row' style='top:722px'>
<div class='rh'></div>
<div class='c' style='left:33px;width:48px;background:#cc3333;color:#fff'><span>000014</span></div>
<div class='c' style='left:82px;width:48px;background:#cc3333;color:#fff'><span>01</span></div>
<div class='c' style='left:131px;width:128px;background:#cc3333;color:#fff'><span>BIGMAT CHATEAUNEUF SUR</span></div>
<div class='c' style='left:260px;width:40px;background:#cc3333;color:#fff'><span>45110</span></div>
<div class='c' style='left:301px;width:208px;background:#cc3333;color:#fff'><span>CHATEAUNEUF-SUR-LOIRE</span></div>
<div class='c' style='left:510px;width:48px;background:#cc3333;color:#fff'><span>Pro</span></div>
<div class='c' style='left:559px;width:64px;background:#cc3333;color:#fff'><span>NORD</span></div>
</div>
<div class='row' style='top:738px'>
<div class='rh'></div>
<div class='c' style='left:33px;width:48px;background:#f0f0f0'><span>000015</span></div>
<div class='c' style='left:82px;width:48px;background:#f0f0f0'><span>01</span></div>
<div class='c' style='left:131px;width:128px;background:#f0f0f0'><span>BIGMAT CONDOM</span></div>
<div class='c' style='left:260px;width:40px;background:#f0f0f0'><span>32100</span></div>
<div class='c' style='left:301px;width:208px;background:#ccffff'><span>CONDOM</span></div>
<div class='c' style='left:510px;width:48px;background:#f0f0f0'><span>Pro</span></div>
<div class='c' style='left:559px;width:64px;background:#f0f0f0'><span>SUD</span></div>
</div>
<div class='row' style='top:754px'>
<div class='rh'></div>
<div class='c' style='left:33px;width:48px;background:#fff'><span>000016</span></div>
<div class='c' style='left:82px;width:48px;background:#fff'><span>01</span></div>
<div class='c' style='left:131px;width:128px;background:#fff'><span>BIGMAT BAULE</span></div>
<div class='c' style='left:260px;width:40px;background:#fff'><span>45130</span></div>
<div class='c' style='left:301px;width:208px;background:#ccffff'><span>BAULE</span></div>
<div class='c' style='left:510px;width:48px;background:#fff'></div>
<div class='c' style='left:559px;width:64px;background:#fff'><span>NORD</span></div>
</div>
<div class='row' style='top:770px'>
<div class='rh'></div>
<div class='c' style='left:33px;width:48px;background:#cc3333;color:#fff'><span>000017</span></div>
<div class='c' style='left:82px;width:48px;background:#cc3333;color:#fff'><span>01</span></div>
<div class='c' style='left:131px;width:128px;background:#cc3333;color:#fff'><span>BIGMAT COUSANCE</span></div>
<div class='c' style='left:260px;width:40px;background:#cc3333;color:#fff'><span>39190</span></div>
<div class='c' style='left:301px;width:208px;background:#cc3333;color:#fff'><span>COUSANCE</span></div>
<div class='c' style='left:510px;width:48px;background:#cc3333;color:#fff'><span>PART</span></div>
<div class='c' style='left:559px;width:64px;background:#cc3333;color:#fff'><span>OUEST</span></div>
</div>
<div class='vd' style='left:81px'></div>
<div class='vd' style='left:130px'></div>
<div class='vd' style='left:259px'></div>
<div class='vd' style='left:300px'></div>
<div class='vd' style='left:509px'></div>
<div class='vd' style='left:558px'></div>
<div class='a' style='left:623px;top:0;width:1px;height:786px;background:#a0a0a0'></div>
<div class='a' style='left:33px;top:18px;width:50px;height:17px;border:1px solid #000;border-right-width:2px;border-bottom-width:2px'></div>
<div class='a' style='left:742px;top:0;width:16px;height:786px;background:#7397c2'></div>
<div class='a' style='left:742px;top:-1px;width:16px;height:17px;background:linear-gradient(90deg,#dbe7f8 0%,#dbe7f8 50%,#bfd3f0 50%,#c3d6f2 100%);border:1px solid #56699a'></div>
<svg class='a' style='left:745.800px;top:4.800px' width='9.200' height='5.200' viewBox='0 0 9.200 5.200'><path d='M0 5.200L4.600 0l4.600 5.200z' fill='#3e4a6b'/></svg>
<div class='a' style='left:742px;top:15px;width:16px;height:280px;background:linear-gradient(90deg,#dbe7f8 0%,#dbe7f8 50%,#bfd3f0 50%,#c3d6f2 100%);border:1px solid #56699a'></div>
<div class='a' style='left:742px;top:770px;width:16px;height:17px;background:linear-gradient(90deg,#dbe7f8 0%,#dbe7f8 50%,#bfd3f0 50%,#c3d6f2 100%);border:1px solid #56699a'></div>
<svg class='a' style='left:745.800px;top:776.100px' width='9.200' height='5' viewBox='0 0 9.200 5'><path d='M0 0L4.600 5l4.600-5z' fill='#3e4a6b'/></svg>
</div>
<div class='t' style='top:209.42px;font-size:12.5px;color:#000;left:463.00px;transform:translateX(-50%) scaleX(0.8600);transform-origin:50% 0;'>Client</div>
<div class='t' style='top:209.42px;font-size:12.5px;color:#000;left:512.00px;transform:translateX(-50%) scaleX(0.8600);transform-origin:50% 0;'>Réseau</div>
<div class='t' style='top:209.42px;font-size:12.5px;color:#000;left:601.00px;transform:translateX(-50%) scaleX(0.8600);transform-origin:50% 0;'>Raison sociale</div>
<div class='t' style='top:209.42px;font-size:12.5px;color:#000;left:686.00px;transform:translateX(-50%) scaleX(0.8600);transform-origin:50% 0;'>C.P.</div>
<div class='t' style='top:209.42px;font-size:12.5px;color:#000;left:811.00px;transform:translateX(-50%) scaleX(0.8600);transform-origin:50% 0;'>Ville</div>
<div class='t' style='top:209.42px;font-size:12.5px;color:#000;left:940.00px;transform:translateX(-50%) scaleX(0.8600);transform-origin:50% 0;'>Famille</div>
<div class='t' style='top:209.42px;font-size:12.5px;color:#000;left:997.00px;transform:translateX(-50%) scaleX(0.8600);transform-origin:50% 0;'>Commercial</div>
<div class='a' style='left:404px;top:993px;width:762px;height:31px;background:#f0f0f0;'></div>
<div class='a' style='left:404px;top:204px;width:762px;height:1px;background:#eef2f6;'></div>
<div class='a' style='left:411px;top:999px;width:77px;height:20px;background:#e1e1e1;border:1px solid #adadad'></div>
<svg class='a' style='left:420px;top:1003.500px' width='11' height='11' viewBox='0 0 11 11'><path d='M1.500 1.500l8 8M9.500 1.500l-8 8' stroke='#e8541f' stroke-width='3' stroke-linecap='butt'/></svg>
<div class='t' style='top:1004.42px;font-size:12.5px;color:#000;left:436.50px;transform:scaleX(0.8851);transform-origin:0 0;'>Abandon</div>
<div class='a' style='left:1165px;top:204px;width:7px;height:820px;background:#f0f0f0;'></div>
<div class='a' style='left:1166px;top:204px;width:4px;height:819px;background:#9b9b9b;'></div>
<div class='a' style='left:1171px;top:204px;width:749px;height:820px;background:#f0f0f0;'></div>
<div class='a' style='left:1171px;top:204px;width:749px;height:24px;background:#f6f6f6;'></div>
<div class='a' style='left:1171px;top:227px;width:1px;height:765px;background:#a0a0a0;'></div>
<div class='a' style='left:1176px;top:228px;width:744px;height:743px;background:#fff;'></div>
<div class='a' style='left:1172px;top:227px;width:748px;height:3px;background:#f0f0f0;'></div>
<div class='a' style='left:1171px;top:992px;width:749px;height:1px;background:#a0a0a0;'></div>
<svg class='a' style='left:1171px;top:204px' width='749' height='24' viewBox='0 0 749 24'>
<defs><linearGradient id='tg' x1='0' y1='0' x2='0' y2='1'><stop offset='0' stop-color='#ffffff'/><stop offset='1' stop-color='#f1f1f1'/></linearGradient></defs>
<path d='M104.5 13Q106.5 4.500 110.5 4.500H165Q168.5 4.500 170.5 8L179.6 23.500H110.6z' fill='url(#tg)' stroke='none'/>
<path d='M104.5 13Q106.5 4.500 110.5 4.500H165Q168.5 4.500 170.5 8L179.6 23.500' fill='none' stroke='#9c9c9c' stroke-width='1'/>
<path d='M173.5 13Q175.5 4.500 179.5 4.500H246.4000000000001Q249.9000000000001 4.500 251.9000000000001 8L261.0000000000001 23.500H179.6z' fill='url(#tg)' stroke='none'/>
<path d='M173.5 13Q175.5 4.500 179.5 4.500H246.4000000000001Q249.9000000000001 4.500 251.9000000000001 8L261.0000000000001 23.500' fill='none' stroke='#9c9c9c' stroke-width='1'/>
<path d='M254.9000000000001 13Q256.9000000000001 4.500 260.9000000000001 4.500H313Q316.5 4.500 318.5 8L327.6 23.500H261.0000000000001z' fill='url(#tg)' stroke='none'/>
<path d='M254.9000000000001 13Q256.9000000000001 4.500 260.9000000000001 4.500H313Q316.5 4.500 318.5 8L327.6 23.500' fill='none' stroke='#9c9c9c' stroke-width='1'/>
<path d='M321.5 13Q323.5 4.500 327.5 4.500H383.29999999999995Q386.79999999999995 4.500 388.79999999999995 8L397.9 23.500H327.6z' fill='url(#tg)' stroke='none'/>
<path d='M321.5 13Q323.5 4.500 327.5 4.500H383.29999999999995Q386.79999999999995 4.500 388.79999999999995 8L397.9 23.500' fill='none' stroke='#9c9c9c' stroke-width='1'/>
<path d='M391.79999999999995 13Q393.79999999999995 4.500 397.79999999999995 4.500H446.4000000000001Q449.9000000000001 4.500 451.9000000000001 8L461.0000000000001 23.500H397.9z' fill='url(#tg)' stroke='none'/>
<path d='M391.79999999999995 13Q393.79999999999995 4.500 397.79999999999995 4.500H446.4000000000001Q449.9000000000001 4.500 451.9000000000001 8L461.0000000000001 23.500' fill='none' stroke='#9c9c9c' stroke-width='1'/>
<path d='M454.9000000000001 13Q456.9000000000001 4.500 460.9000000000001 4.500H534.5Q538.0 4.500 540.0 8L549.1 23.500H461.0000000000001z' fill='url(#tg)' stroke='none'/>
<path d='M454.9000000000001 13Q456.9000000000001 4.500 460.9000000000001 4.500H534.5Q538.0 4.500 540.0 8L549.1 23.500' fill='none' stroke='#9c9c9c' stroke-width='1'/>
<path d='M543.0 13Q545.0 4.500 549.0 4.500H624.0999999999999Q627.5999999999999 4.500 629.5999999999999 8L638.6999999999999 23.500H549.1z' fill='url(#tg)' stroke='none'/>
<path d='M543.0 13Q545.0 4.500 549.0 4.500H624.0999999999999Q627.5999999999999 4.500 629.5999999999999 8L638.6999999999999 23.500' fill='none' stroke='#9c9c9c' stroke-width='1'/>
<path d='M0 23.500H6L14.500 7.500Q16 4.500 19.500 4.500H96Q99.5 4.500 101.5 8L110.59999999999991 23.500V24H0z' fill='url(#tg)' stroke='none'/>
<path d='M638.6999999999998 23.500H749' fill='none' stroke='#a6a6a6' stroke-width='1'/>
<path d='M0 23.500H6L14.500 7.500Q16 4.500 19.500 4.500H96Q99.5 4.500 101.5 8L110.59999999999991 23.500' fill='none' stroke='#9c9c9c' stroke-width='1'/>
</svg>
<div class='t' style='top:212.42px;font-size:12.5px;color:#000;font-weight:bold;left:1205.30px;transform:scaleX(0.9590);transform-origin:0 0;'>Généralités</div>
<div class='t' style='top:212.42px;font-size:12.5px;color:#000;left:1297.50px;transform:scaleX(0.8416);transform-origin:0 0;'>Livraison</div>
<div class='t' style='top:212.42px;font-size:12.5px;color:#000;left:1367.70px;transform:scaleX(0.8524);transform-origin:0 0;'>Facturation</div>
<div class='t' style='top:212.42px;font-size:12.5px;color:#000;left:1448.60px;transform:scaleX(0.8527);transform-origin:0 0;'>Encours</div>
<div class='t' style='top:212.42px;font-size:12.5px;color:#000;left:1515.00px;transform:scaleX(0.8697);transform-origin:0 0;'>Contacts</div>
<div class='t' style='top:212.42px;font-size:12.5px;color:#000;left:1585.65px;transform:scaleX(0.8636);transform-origin:0 0;'>Actions</div>
<div class='t' style='top:212.42px;font-size:12.5px;color:#000;left:1647.90px;transform:scaleX(0.8551);transform-origin:0 0;'>Opportunités</div>
<div class='t' style='top:212.42px;font-size:12.5px;color:#000;left:1736.10px;transform:scaleX(0.8745);transform-origin:0 0;'>Qui, quand ?</div>
<svg class='a' style='left:1188px;top:210px' width='14' height='16' viewBox='0 0 14 16'><path d='M5.500 1.500h4.500l3 3v7.500h-7.500z' fill='#f4efe4' stroke='#cfc8b8'/><path d='M1.500 4.500h4.500l3 3v7.500h-7.500z' fill='#fcf9f2' stroke='#d6d0c2'/></svg>
<svg class='a' style='left:1279px;top:211px' width='16' height='14' viewBox='0 0 16 14'><path d='M1.500 2.500Q1.500 1 3 1h7Q11.500 1 11.500 2.500V11.500h-10z' fill='#d5232b'/><rect x='2.500' y='3' width='8' height='3.500' fill='#4a2325'/><path d='M11.500 2.500l3.500-1v9l-3.500 1.500z' fill='#8d8d8d'/><rect x='2' y='11' width='3' height='2.200' fill='#2a2a2a'/><rect x='8' y='11' width='3' height='2.200' fill='#2a2a2a'/><rect x='1' y='8' width='11' height='1' fill='#a81b22'/></svg>
<svg class='a' style='left:1350.500px;top:211px' width='15' height='15' viewBox='0 0 15 15'><rect x='.5' y='.5' width='10' height='12' fill='#f4f4f4' stroke='#d2d2d2'/><path d='M1 3.500h9M1 6.500h9M1 9.500h9M4 1v11M7 1v11' stroke='#dadada'/><rect x='6.500' y='4.500' width='7' height='9.500' fill='#e6e8e4' stroke='#a3a89e'/><rect x='7.500' y='5.500' width='5' height='2' fill='#86b074'/><path d='M8 9.500h4M8 11.500h4' stroke='#b0b4ac'/></svg>
<div class='t' style='left:1432px;top:207.500px;font-size:18px;font-weight:bold;color:#96ad2a;text-shadow:0.7px 0.7px 0 #65761a;transform:scaleX(.95);transform-origin:0 0'>$</div>
<svg class='a' style='left:1497.500px;top:210px' width='16' height='16' viewBox='0 0 16 16'><circle cx='10.500' cy='3.800' r='2.700' fill='#e9b676'/><path d='M6.500 12.500c0-4 1.800-6 4-6s4.500 2 4.500 6z' fill='#c9c6d8'/><circle cx='4.300' cy='6' r='2.600' fill='#f0c14a'/><path d='M.3 14c0-3.500 1.700-5.300 4-5.300s4 1.800 4 5.300z' fill='#8d6cc4'/><circle cx='7.800' cy='9.500' r='2' fill='#f0c690'/><path d='M4.500 15.500c0-2.600 1.400-4 3.300-4s3.300 1.400 3.300 4z' fill='#5fa3ea'/></svg>
<svg class='a' style='left:1570.500px;top:212.500px' width='11' height='10' viewBox='0 0 11 10'><path d='M1.200 4.800l3 3.300L9.800 1.500' stroke='#2a9fb0' stroke-width='2.200' fill='none'/></svg>
<svg class='a' style='left:1631px;top:211px' width='15' height='14' viewBox='0 0 15 14'><path d='M0.500 7l7-6 6.500 5-7 6z' fill='#b4d9aa'/><path d='M5.500 5l4-3.500 3.500 2.700-4 3.500z' fill='#f3d65a'/><path d='M0.500 7l6.500 5v1.800l-6.500-5z' fill='#85b57a'/><path d='M7 12l7-6v1.800l-7 6z' fill='#9cc791'/></svg>
<svg class='a' style='left:1721px;top:212.500px' width='11' height='10' viewBox='0 0 11 10'><path d='M1.200 4.800l3 3.300L9.800 1.500' stroke='#2a9fb0' stroke-width='2.200' fill='none'/></svg>
<div class='a' style='left:1177px;top:232px;width:580px;height:25px;background:#00a5b5;'></div>
<div class='t' style='top:241.90px;font-size:11.7px;color:#fff;letter-spacing:-0.443px;font-weight:bold;left:1209.00px;'>DONNEES</div>
<div class='t' style='top:241.10px;font-size:11.7px;color:#fff;letter-spacing:-0.237px;font-weight:bold;left:1578.80px;'>CLASSIFICATION</div>
<div class='a' style='left:1177px;top:663px;width:580px;height:25px;background:#00a5b5;'></div>
<div class='t' style='top:672.30px;font-size:11.7px;color:#fff;letter-spacing:-0.271px;font-weight:bold;left:1209.00px;'>ADRESSE PRINCIPALE</div>
<div class='t' style='top:270.62px;font-size:12.5px;color:#000;right:656.30px;transform:scaleX(0.8727);transform-origin:100% 0;'>Réseau</div>
<div class='f' style='left:1271px;top:268px;width:90px;height:20px'></div>
<div class='t' style='top:271.72px;font-size:12.5px;color:#000;font-weight:bold;left:1274.60px;transform:scaleX(0.9500);transform-origin:0 0;'>0</div>
<div class='q' style='left:1364px;top:269px'><i>?</i></div>
<div class='t' style='top:270.62px;font-size:12.5px;color:#000;left:1383.80px;transform:scaleX(0.8566);transform-origin:0 0;'>Réseau GénéralDocuments liés ?</div>
<div class='a' style='left:1551px;top:271px;width:10px;height:10px;border:1px solid #d4d4d4;background:#fff'></div>
<div class='t' style='top:295.62px;font-size:12.5px;color:#000;right:656.30px;transform:scaleX(0.8386);transform-origin:100% 0;'>Client</div>
<div class='f' style='left:1271px;top:293px;width:90px;height:20px'></div>
<div class='t' style='top:296.72px;font-size:12.5px;color:#000;font-weight:bold;left:1274.00px;transform:scaleX(1.0021);transform-origin:0 0;'>000001</div>
<div class='t' style='top:320.62px;font-size:12.5px;color:#000;right:656.30px;transform:scaleX(0.8599);transform-origin:100% 0;'>Raison sociale</div>
<div class='f' style='left:1271px;top:318px;width:240px;height:20px'></div>
<div class='t' style='top:321.72px;font-size:12.5px;color:#000;font-weight:bold;left:1274.00px;transform:scaleX(0.9662);transform-origin:0 0;'>BIGMAT BLOIS</div>
<div class='t' style='top:346.12px;font-size:12.5px;color:#000;right:656.30px;transform:scaleX(0.8588);transform-origin:100% 0;'>Facturation</div>
<div class='a' style='left:1271px;top:343px;width:10px;height:17px;background:#ebeffa;'></div>
<svg class='a' style='left:1271px;top:346.5px' width='10' height='10' viewBox='0 0 10 10'><rect x='.5' y='.5' width='9' height='9' fill='#fff' stroke='#d4d4d4'/><path d='M2.300 5l2 2.200 3.500-4.200' stroke='#c8c8c8' stroke-width='1.100' fill='none'/></svg>
<div class='t' style='top:346.12px;font-size:12.5px;color:#000;right:545.90px;transform:scaleX(0.8696);transform-origin:100% 0;'>Livraison</div>
<svg class='a' style='left:1381px;top:346.5px' width='10' height='10' viewBox='0 0 10 10'><rect x='.5' y='.5' width='9' height='9' fill='#fff' stroke='#d4d4d4'/><path d='M2.300 5l2 2.200 3.500-4.200' stroke='#c8c8c8' stroke-width='1.100' fill='none'/></svg>
<div class='t' style='top:367.62px;font-size:12.5px;color:#000;right:656.30px;transform:scaleX(0.8568);transform-origin:100% 0;'>Client facturé</div>
<div class='f' style='left:1271px;top:365px;width:90px;height:20px'></div>
<div class='q' style='left:1364px;top:366px'><i>?</i></div>
<div class='t' style='top:392.62px;font-size:12.5px;color:#000;right:656.30px;transform:scaleX(0.8782);transform-origin:100% 0;'>Type blocage</div>
<div class='f' style='left:1271px;top:390px;width:90px;height:20px'></div>
<div class='q' style='left:1364px;top:391px'><i>?</i></div>
<div class='t' style='top:417.62px;font-size:12.5px;color:#000;right:656.30px;transform:scaleX(0.8823);transform-origin:100% 0;'>Motif</div>
<div class='a' style='left:1271px;top:415px;width:240px;height:98px;background:#ebeffa;border:1px solid #7a7a7a'></div>
<div class='a' style='left:1492px;top:416px;width:18px;height:96px;background:#f0f0f0;'></div>
<svg class='a' style='left:1496.5px;top:423px' width='9' height='6' viewBox='0 0 9 6'><path d='M0.800 5l3.700-3.700L8.200 5' stroke='#c2c2c2' stroke-width='1.300' fill='none'/></svg>
<svg class='a' style='left:1496.5px;top:499.5px' width='9' height='6' viewBox='0 0 9 6'><path d='M0.800 1l3.700 3.700L8.200 1' stroke='#c2c2c2' stroke-width='1.300' fill='none'/></svg>
<div class='t' style='top:521.12px;font-size:12.5px;color:#000;right:657.40px;transform:scaleX(0.8269);transform-origin:100% 0;'>Commentaire ext</div>
<div class='a' style='left:1270px;top:518px;width:455px;height:65px;background:#ebeffa;border:1px solid #7a7a7a'></div>
<div class='a' style='left:1706px;top:519px;width:18px;height:63px;background:#f0f0f0;'></div>
<div class='t' style='top:522.42px;font-size:12.5px;color:#000;font-weight:bold;left:1272.90px;transform:scaleX(0.9420);transform-origin:0 0;'>Commentaire externe du client</div>
<svg class='a' style='left:1710.5px;top:525.5px' width='9' height='6' viewBox='0 0 9 6'><path d='M0.800 5l3.700-3.700L8.200 5' stroke='#c2c2c2' stroke-width='1.300' fill='none'/></svg>
<svg class='a' style='left:1710.5px;top:570px' width='9' height='6' viewBox='0 0 9 6'><path d='M0.800 1l3.700 3.700L8.200 1' stroke='#c2c2c2' stroke-width='1.300' fill='none'/></svg>
<div class='t' style='top:591.12px;font-size:12.5px;color:#000;right:657.40px;transform:scaleX(0.8255);transform-origin:100% 0;'>Commentaire int</div>
<div class='a' style='left:1270px;top:588px;width:455px;height:65px;background:#ebeffa;border:1px solid #7a7a7a'></div>
<div class='a' style='left:1706px;top:589px;width:18px;height:63px;background:#f0f0f0;'></div>
<div class='t' style='top:592.42px;font-size:12.5px;color:#000;font-weight:bold;left:1272.90px;transform:scaleX(0.9392);transform-origin:0 0;'>Commentaire interne du client</div>
<svg class='a' style='left:1710.5px;top:595.5px' width='9' height='6' viewBox='0 0 9 6'><path d='M0.800 5l3.700-3.700L8.200 5' stroke='#c2c2c2' stroke-width='1.300' fill='none'/></svg>
<svg class='a' style='left:1710.5px;top:640px' width='9' height='6' viewBox='0 0 9 6'><path d='M0.800 1l3.700 3.700L8.200 1' stroke='#c2c2c2' stroke-width='1.300' fill='none'/></svg>
<div class='t' style='top:270.62px;font-size:12.5px;color:#000;right:311.30px;transform:scaleX(0.8586);transform-origin:100% 0;'>Groupe</div>
<div class='f' style='left:1616px;top:268px;width:110px;height:20px'></div>
<div class='t' style='top:271.72px;font-size:12.5px;color:#000;font-weight:bold;left:1619.00px;transform:scaleX(0.9973);transform-origin:0 0;'>000001</div>
<div class='q' style='left:1729px;top:269px'><i>?</i></div>
<div class='t' style='top:295.62px;font-size:12.5px;color:#000;right:311.30px;transform:scaleX(0.8291);transform-origin:100% 0;'>Forme juridique</div>
<div class='f' style='left:1616px;top:293px;width:110px;height:20px'></div>
<div class='t' style='top:296.72px;font-size:12.5px;color:#000;font-weight:bold;left:1619.00px;transform:scaleX(0.9757);transform-origin:0 0;'>EURL</div>
<div class='q' style='left:1729px;top:294px'><i>?</i></div>
<div class='t' style='top:295.62px;font-size:12.5px;color:#000;left:1748.60px;transform:scaleX(0.8433);transform-origin:0 0;'>Entreprise Unipers. à Resp. Limitée</div>
<div class='t' style='top:320.62px;font-size:12.5px;color:#000;right:311.30px;transform:scaleX(0.8665);transform-origin:100% 0;'>Code SIRET</div>
<div class='f' style='left:1616px;top:318px;width:110px;height:20px'></div>
<div class='t' style='top:345.62px;font-size:12.5px;color:#000;right:311.30px;transform:scaleX(0.8556);transform-origin:100% 0;'>Numéro SIREN</div>
<div class='f' style='left:1616px;top:343px;width:110px;height:20px'></div>
<div class='t' style='top:370.62px;font-size:12.5px;color:#000;right:311.30px;transform:scaleX(0.8517);transform-origin:100% 0;'>Code NAF</div>
<div class='f' style='left:1616px;top:368px;width:110px;height:20px'></div>
<div class='t' style='top:371.72px;font-size:12.5px;color:#000;font-weight:bold;left:1619.00px;transform:scaleX(1.0531);transform-origin:0 0;'>0115Z</div>
<div class='q' style='left:1729px;top:369px'><i>?</i></div>
<div class='t' style='top:395.62px;font-size:12.5px;color:#000;right:311.30px;transform:scaleX(0.8234);transform-origin:100% 0;'>Commercial</div>
<div class='f' style='left:1616px;top:393px;width:110px;height:20px'></div>
<div class='t' style='top:396.72px;font-size:12.5px;color:#000;font-weight:bold;left:1619.00px;transform:scaleX(0.9673);transform-origin:0 0;'>NORD</div>
<div class='q' style='left:1729px;top:394px'><i>?</i></div>
<div class='t' style='top:395.62px;font-size:12.5px;color:#000;left:1748.60px;transform:scaleX(0.8835);transform-origin:0 0;'>Paul PATRICK</div>
<div class='t' style='top:420.62px;font-size:12.5px;color:#000;right:311.30px;transform:scaleX(0.8217);transform-origin:100% 0;'>Famille</div>
<div class='f' style='left:1616px;top:418px;width:110px;height:20px'></div>
<div class='t' style='top:421.72px;font-size:12.5px;color:#000;font-weight:bold;left:1619.00px;transform:scaleX(0.9550);transform-origin:0 0;'>Pro</div>
<div class='q' style='left:1729px;top:419px'><i>?</i></div>
<div class='t' style='top:420.62px;font-size:12.5px;color:#000;left:1748.60px;transform:scaleX(0.8542);transform-origin:0 0;'>Professionnel</div>
<div class='t' style='top:445.62px;font-size:12.5px;color:#000;right:311.30px;transform:scaleX(0.8788);transform-origin:100% 0;'>Secteur activité</div>
<div class='f' style='left:1616px;top:443px;width:110px;height:20px'></div>
<div class='t' style='top:446.72px;font-size:12.5px;color:#000;font-weight:bold;left:1619.00px;transform:scaleX(1.0429);transform-origin:0 0;'>07</div>
<div class='q' style='left:1729px;top:444px'><i>?</i></div>
<div class='t' style='top:445.62px;font-size:12.5px;color:#000;left:1748.60px;transform:scaleX(0.8538);transform-origin:0 0;'>Menuiserie</div>
<div class='t' style='top:470.62px;font-size:12.5px;color:#000;right:311.30px;transform:scaleX(0.8647);transform-origin:100% 0;'>Domaine activité</div>
<div class='f' style='left:1616px;top:468px;width:110px;height:20px'></div>
<div class='t' style='top:495.62px;font-size:12.5px;color:#000;right:311.30px;transform:scaleX(0.8845);transform-origin:100% 0;'>Indice confiance</div>
<div class='f' style='left:1616px;top:493px;width:110px;height:20px'></div>
<div class='t' style='top:496.72px;font-size:12.5px;color:#000;font-weight:bold;left:1619.00px;transform:scaleX(0.9733);transform-origin:0 0;'>001</div>
<div class='q' style='left:1729px;top:494px'><i>?</i></div>
<div class='t' style='top:495.62px;font-size:12.5px;color:#000;left:1748.60px;transform:scaleX(0.8796);transform-origin:0 0;'>AAA</div>
<div class='a' style='left:1750px;top:269px;width:14px;height:14px;background:#cdcdcd;'></div>
<div class='t' style='top:695.62px;font-size:12.5px;color:#000;right:659.00px;transform:scaleX(0.8514);transform-origin:100% 0;'>Correspondant</div>
<div class='f' style='left:1268px;top:693px;width:200px;height:20px'></div>
<div class='t' style='top:695.62px;font-size:12.5px;color:#000;right:374.00px;transform:scaleX(0.8891);transform-origin:100% 0;'>Contact</div>
<div class='f' style='left:1553px;top:693px;width:170px;height:20px'></div>
<div class='t' style='top:720.62px;font-size:12.5px;color:#000;right:659.00px;transform:scaleX(0.8658);transform-origin:100% 0;'>Adresse</div>
<div class='f' style='left:1268px;top:718px;width:455px;height:18px'></div>
<div class='t' style='top:720.72px;font-size:12.5px;color:#000;font-weight:bold;left:1270.90px;transform:scaleX(0.9978);transform-origin:0 0;'>5 BLD DE L'INDUSTRIE</div>
<div class='f' style='left:1268px;top:737px;width:455px;height:18px'></div>
<div class='t' style='top:739.72px;font-size:12.5px;color:#000;font-weight:bold;left:1270.90px;transform:scaleX(0.9238);transform-origin:0 0;'>Complément adresse</div>
<div class='f' style='left:1268px;top:756px;width:455px;height:18px'></div>
<div class='t' style='top:758.72px;font-size:12.5px;color:#000;font-weight:bold;left:1270.90px;transform:scaleX(0.9259);transform-origin:0 0;'>Complément adresse bis</div>
<div class='t' style='top:782.62px;font-size:12.5px;color:#000;right:658.70px;transform:scaleX(0.8664);transform-origin:100% 0;'>Code postal</div>
<div class='f' style='left:1268px;top:780px;width:200px;height:19.5px'></div>
<div class='t' style='top:783.47px;font-size:12.5px;color:#000;font-weight:bold;left:1271.00px;transform:scaleX(1.0537);transform-origin:0 0;'>01120</div>
<div class='q' style='left:1471px;top:781px'><i>?</i></div>
<div class='t' style='top:782.62px;font-size:12.5px;color:#000;right:374.10px;transform:scaleX(0.8976);transform-origin:100% 0;'>Ville</div>
<div class='f' style='left:1553px;top:780px;width:170px;height:19.5px'></div>
<div class='t' style='top:783.47px;font-size:12.5px;color:#000;font-weight:bold;left:1556.00px;transform:scaleX(0.9721);transform-origin:0 0;'>MONTLUEL</div>
<div class='q' style='left:1726px;top:781px'><i>?</i></div>
<div class='t' style='top:807.62px;font-size:12.5px;color:#000;right:658.70px;transform:scaleX(0.8888);transform-origin:100% 0;'>Pays</div>
<div class='f' style='left:1268px;top:805px;width:200px;height:19.5px'></div>
<div class='t' style='top:808.47px;font-size:12.5px;color:#000;font-weight:bold;left:1271.00px;transform:scaleX(0.9662);transform-origin:0 0;'>FR</div>
<div class='q' style='left:1471px;top:806px'><i>?</i></div>
<div class='t' style='top:832.62px;font-size:12.5px;color:#000;right:658.70px;transform:scaleX(0.8870);transform-origin:100% 0;'>Téléphone</div>
<div class='f' style='left:1268px;top:830px;width:200px;height:19.5px'></div>
<div class='t' style='top:833.47px;font-size:12.5px;color:#000;font-weight:bold;left:1271.00px;transform:scaleX(1.0394);transform-origin:0 0;'>05 63 40 50 60</div>
<div class='q' style='left:1471px;top:831px'><i>?</i></div>
<div class='t' style='top:832.62px;font-size:12.5px;color:#000;right:374.10px;transform:scaleX(0.8634);transform-origin:100% 0;'>Portable</div>
<div class='f' style='left:1553px;top:830px;width:170px;height:19.5px'></div>
<div class='t' style='top:833.47px;font-size:12.5px;color:#000;font-weight:bold;left:1556.00px;transform:scaleX(1.0274);transform-origin:0 0;'>06 10 56 91 01</div>
<div class='q' style='left:1726px;top:831px'><i>?</i></div>
<div class='t' style='top:857.62px;font-size:12.5px;color:#000;right:658.70px;transform:scaleX(0.8840);transform-origin:100% 0;'>E.Mail</div>
<div class='a' style='left:1268px;top:855px;width:200px;height:20px;background:#ebeffa;border:1px solid #4a4a4a'></div>
<div class='a' style='left:1449px;top:856px;width:18px;height:18px;background:#f0f0f0;'></div>
<div class='t' style='top:858.72px;font-size:12.5px;color:#000;font-weight:bold;left:1271.00px;transform:scaleX(0.9670);transform-origin:0 0;'>test@test.fr,fhoubert@elcia.co</div>
<svg class='a' style='left:1453px;top:858.500px' width='9' height='14' viewBox='0 0 9 14'><path d='M1.300 5l3.200-3.200L7.700 5M1.300 9l3.200 3.200L7.700 9' stroke='#4a4a4a' stroke-width='1.300' fill='none'/></svg>
<div class='t' style='top:857.62px;font-size:12.5px;color:#000;right:374.10px;transform:scaleX(0.8734);transform-origin:100% 0;'>Fax</div>
<div class='f' style='left:1553px;top:855px;width:170px;height:19.5px'></div>
<div class='t' style='top:858.47px;font-size:12.5px;color:#000;font-weight:bold;left:1556.00px;transform:scaleX(1.0370);transform-origin:0 0;'>02 54 42 55 87</div>
<div class='q' style='left:1726px;top:856px'><i>?</i></div>
<div class='a' style='left:1176px;top:971px;width:744px;height:15px;background:#f0f0f0;'></div>
<div class='a' style='left:1193px;top:971px;width:648px;height:15px;background:#cdcdcd;'></div>
<svg class='a' style='left:1181px;top:974px' width='7' height='9' viewBox='0 0 7 9'><path d='M5.500 1L2 4.500 5.500 8' stroke='#404040' stroke-width='1.600' fill='none'/></svg>
<svg class='a' style='left:1910px;top:974px' width='7' height='9' viewBox='0 0 7 9'><path d='M1.500 1L5 4.500 1.500 8' stroke='#404040' stroke-width='1.600' fill='none'/></svg>
<div class='a' style='left:1177px;top:999px;width:80px;height:20px;background:#d3d3d3;border:1px solid #c4c4c4'></div>
<div class='t' style='top:1004.22px;font-size:12.5px;color:#8c8c8c;left:1202.40px;transform:scaleX(0.8838);transform-origin:0 0;'>Validation</div>
<div class='a' style='left:1261px;top:999px;width:80px;height:20px;background:#d3d3d3;border:1px solid #c4c4c4'></div>
<div class='t' style='top:1004.22px;font-size:12.5px;color:#8c8c8c;left:1271.40px;transform:scaleX(0.8856);transform-origin:0 0;'>Sauvegarde</div>
<div class='a' style='left:1345px;top:999px;width:80px;height:20px;background:#d3d3d3;border:1px solid #c4c4c4'></div>
<div class='t' style='top:1004.22px;font-size:12.5px;color:#8c8c8c;left:1372.40px;transform:scaleX(0.8931);transform-origin:0 0;'>Abandon</div>
<svg class='a' style='left:1186px;top:1004px' width='11' height='10' viewBox='0 0 11 10'><path d='M1.500 5l3 3 5-6' stroke='#c0c0c0' stroke-width='2' fill='none'/></svg>
<svg class='a' style='left:1356.500px;top:1003.500px' width='11' height='11' viewBox='0 0 11 11'><path d='M1.500 1.500l8 8M9.500 1.500l-8 8' stroke='#b8b8b8' stroke-width='2.300'/></svg>
<div class='a' style='left:8px;top:1024px;width:1912px;height:25px;background:#fff;'></div>
<div class='a' style='left:9px;top:1025px;width:1911px;height:23px;background:#ecf0f4;'></div>
<svg class='a' style='left:1911px;top:1037px' width='9' height='11' viewBox='0 0 9 11'><g fill='#8db0e6'><rect x='6.500' y='1' width='1.500' height='1.500'/><rect x='4' y='4' width='1.500' height='1.500'/><rect x='6.500' y='4' width='1.500' height='1.500'/><rect x='1.500' y='7' width='1.500' height='1.500'/><rect x='4' y='7' width='1.500' height='1.500'/><rect x='6.500' y='7' width='1.500' height='1.500'/></g></svg>
<svg class='a' style='left:1126px;top:1047px' width='14' height='21' viewBox='0 0 14 21'><path d='M1.500 1.200V17.500L5.300 14l2.600 6 2.400-1-2.600-5.900H12.800z' fill='#fff' stroke='#000' stroke-width='1.100'/></svg>
</div></body></html>
